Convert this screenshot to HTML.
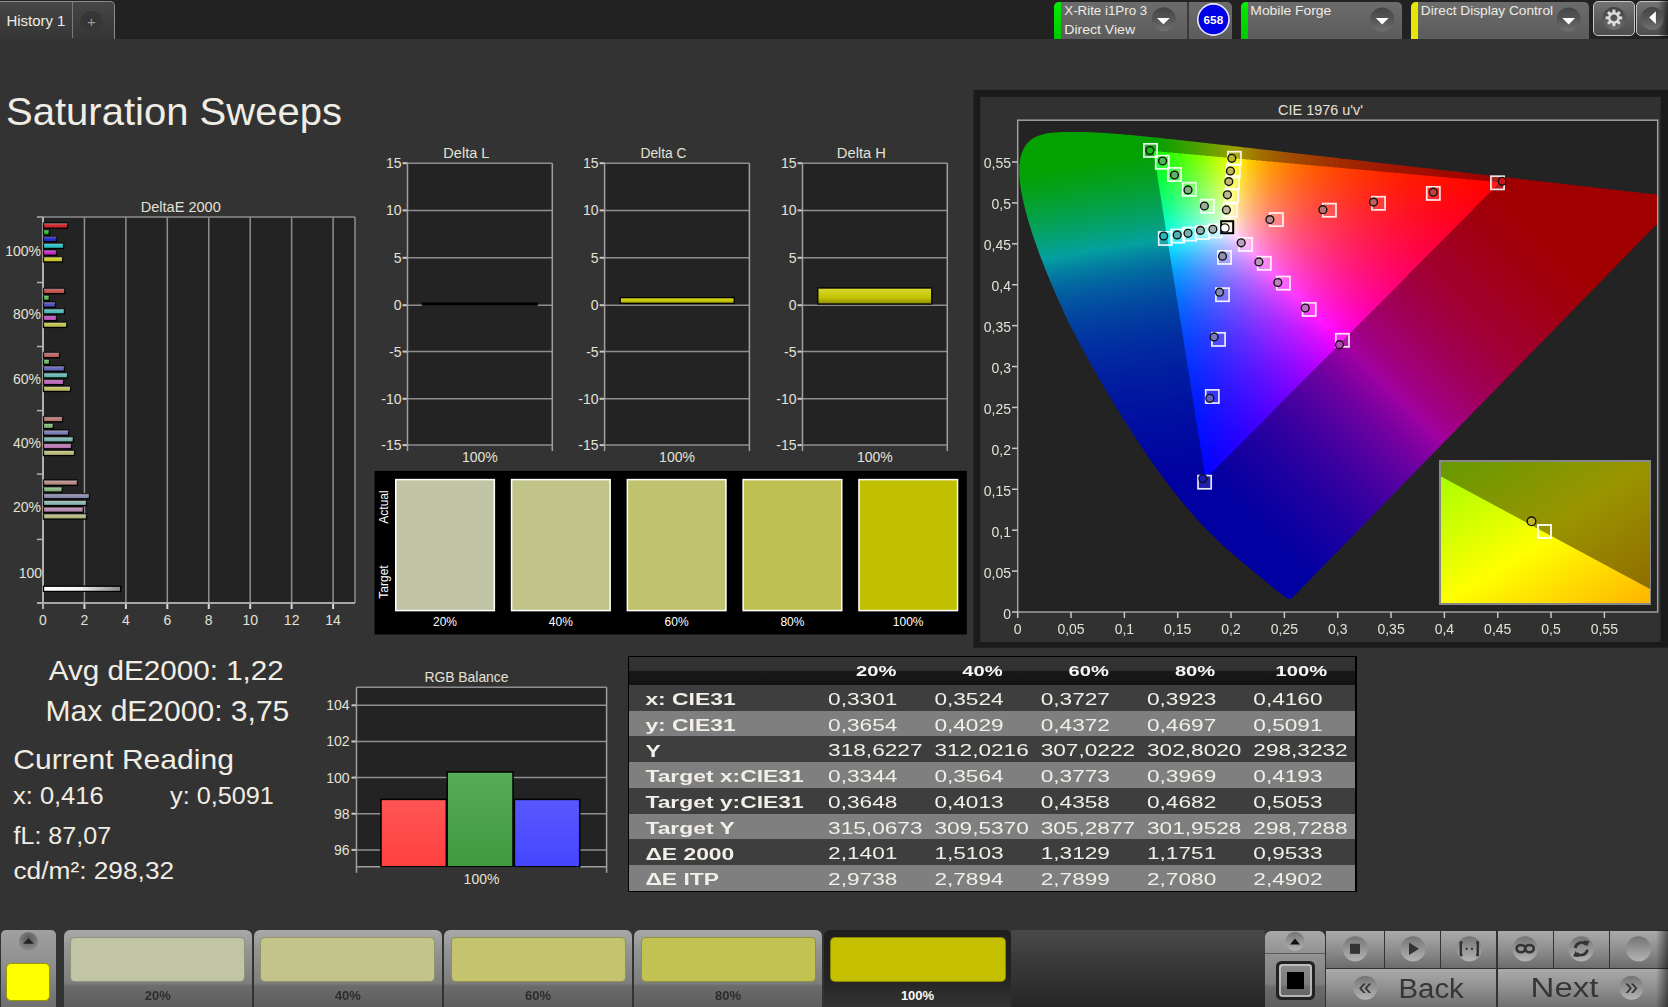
<!DOCTYPE html>
<html><head><meta charset="utf-8">
<style>
html,body{margin:0;padding:0;}
body{width:1668px;height:1007px;overflow:hidden;background:#333;position:relative;font-family:"Liberation Sans",sans-serif;}
svg text{font-family:"Liberation Sans",sans-serif;}
.abs{position:absolute;}
.th{position:absolute;width:120px;text-align:center;color:#f4f4f4;font-weight:bold;font-size:15px;line-height:18px;transform:scaleX(1.32);}
.tl{position:absolute;color:#f0ede6;font-weight:bold;font-size:15.5px;line-height:20px;transform-origin:0 0;transform:scaleX(1.36);white-space:nowrap;}
.tv{position:absolute;color:#f0ede6;font-size:15.5px;line-height:20px;transform-origin:0 0;transform:scaleX(1.40);white-space:nowrap;}
.big{position:absolute;color:#efece2;white-space:nowrap;line-height:1;}
</style></head><body>
<!-- top bar -->
<div class="abs" style="left:0;top:0;width:1668px;height:39px;background:#222;"></div>
<div class="abs" style="left:0;top:0.5px;width:114.5px;height:38.5px;background:linear-gradient(#464646,#363636);border-top:1.2px solid #8a8a8a;border-right:1.5px solid #8a8a8a;border-radius:0 5px 0 0;box-sizing:border-box;"></div>
<div class="abs" style="left:72px;top:2px;width:1px;height:36px;background:#7a7a7a;"></div>

<div class="abs" style="left:80px;top:10.5px;width:23px;height:23px;border-radius:50%;background:radial-gradient(circle at 50% 45%,#333 0%,#383838 70%,#444 100%);"></div>
<div class="abs" style="left:84px;top:13px;width:15px;text-align:center;font-size:15px;color:#9a9a9a;line-height:18px;">+</div>

<div class="abs" style="left:1054px;top:1.5px;width:178px;height:37px;background:linear-gradient(#6c6c6c,#5c5c5c);border-radius:5px 5px 0 0;overflow:hidden;">
  <div class="abs" style="left:0;top:0;width:7px;height:37px;background:linear-gradient(#00ee00,#00c800);"></div>
  <div class="abs" style="left:133px;top:0;width:1.5px;height:37px;background:#3a3a3a;"></div>
</div>



<div class="abs" style="left:1240.5px;top:1.5px;width:161.5px;height:37px;background:linear-gradient(#6c6c6c,#5c5c5c);border-radius:5px 5px 0 0;overflow:hidden;">
  <div class="abs" style="left:0;top:0;width:7px;height:37px;background:linear-gradient(#00ee00,#00c800);"></div>
</div>


<div class="abs" style="left:1410.8px;top:1.5px;width:178.2px;height:37px;background:linear-gradient(#6c6c6c,#5c5c5c);border-radius:5px 5px 0 0;overflow:hidden;">
  <div class="abs" style="left:0;top:0;width:7px;height:37px;background:#e6e600;"></div>
</div>


<div class="abs" style="left:1593px;top:1.2px;width:42px;height:34.4px;background:linear-gradient(#737373,#5a5a5a 60%,#4e4e4e);border:1.2px solid #c4c4c4;border-radius:5px;box-sizing:border-box;"></div>
<div class="abs" style="left:1636px;top:1.2px;width:40px;height:34.4px;background:linear-gradient(#737373,#5a5a5a 60%,#4e4e4e);border:1.2px solid #c4c4c4;border-radius:5px;box-sizing:border-box;"></div><div class="abs" style="left:1658px;top:0;width:10px;height:38px;background:linear-gradient(90deg,rgba(0,0,0,0),rgba(0,0,0,0.55));"></div>

<svg class="abs" style="left:0;top:0;" width="1668" height="1007">
<defs>
<linearGradient id="dd" x1="0" y1="0" x2="0" y2="1"><stop offset="0" stop-color="#444"/><stop offset="0.5" stop-color="#555"/><stop offset="1" stop-color="#707070"/></linearGradient>
</defs>
<circle cx="1163.7" cy="19.2" r="12" fill="url(#dd)"/>
<path d="M1157 17.9 L1169.8 17.9 L1163.4 24.3 Z" fill="#fff"/>
<circle cx="1382.2" cy="19.4" r="12" fill="url(#dd)"/>
<path d="M1375.8 18.1 L1388.6 18.1 L1382.2 24.5 Z" fill="#fff"/>
<circle cx="1568.7" cy="19.4" r="12" fill="url(#dd)"/>
<path d="M1562.3 18.1 L1575.1 18.1 L1568.7 24.5 Z" fill="#fff"/>
<circle cx="1213.4" cy="19.5" r="15.6" fill="#0000e6" stroke="#e8e8ff" stroke-width="1.6"/>
<text x="1203.6" y="23.6" font-size="11" font-weight="bold" fill="#fff" textLength="19.6" lengthAdjust="spacingAndGlyphs">658</text>
<circle cx="1613.9" cy="18.4" r="11.4" fill="url(#dd)"/>
<g transform="translate(1613.9,17.9)" fill="#dcdcdc">
<circle r="4.7" fill="none" stroke="#dcdcdc" stroke-width="2.4"/>
<rect x="-1.5" y="-8.3" width="3" height="3.6" transform="rotate(0)"/><rect x="-1.5" y="-8.3" width="3" height="3.6" transform="rotate(45)"/><rect x="-1.5" y="-8.3" width="3" height="3.6" transform="rotate(90)"/><rect x="-1.5" y="-8.3" width="3" height="3.6" transform="rotate(135)"/><rect x="-1.5" y="-8.3" width="3" height="3.6" transform="rotate(180)"/><rect x="-1.5" y="-8.3" width="3" height="3.6" transform="rotate(225)"/><rect x="-1.5" y="-8.3" width="3" height="3.6" transform="rotate(270)"/><rect x="-1.5" y="-8.3" width="3" height="3.6" transform="rotate(315)"/>
</g>
<circle cx="1652.2" cy="18.4" r="11.4" fill="url(#dd)"/>
<path d="M1649.2 17.5 L1655.9 11.2 L1655.9 23.9 Z" fill="#fff"/>
</svg>



<svg class="abs" style="left:0;top:0;" width="1668" height="1007">
<text x="140.69" y="211.9" font-size="14.3" fill="#e4e1d6" font-weight="normal" textLength="80.13" lengthAdjust="spacingAndGlyphs">DeltaE 2000</text>
<rect x="43" y="217" width="312" height="386" fill="#232323" />
<line x1="84.44" y1="217" x2="84.44" y2="603" stroke="#8e8e8e" stroke-width="1.5" />
<line x1="84.44" y1="603" x2="84.44" y2="609" stroke="#d8d8d8" stroke-width="2" />
<line x1="125.88" y1="217" x2="125.88" y2="603" stroke="#8e8e8e" stroke-width="1.5" />
<line x1="125.88" y1="603" x2="125.88" y2="609" stroke="#d8d8d8" stroke-width="2" />
<line x1="167.32" y1="217" x2="167.32" y2="603" stroke="#8e8e8e" stroke-width="1.5" />
<line x1="167.32" y1="603" x2="167.32" y2="609" stroke="#d8d8d8" stroke-width="2" />
<line x1="208.76" y1="217" x2="208.76" y2="603" stroke="#8e8e8e" stroke-width="1.5" />
<line x1="208.76" y1="603" x2="208.76" y2="609" stroke="#d8d8d8" stroke-width="2" />
<line x1="250.2" y1="217" x2="250.2" y2="603" stroke="#8e8e8e" stroke-width="1.5" />
<line x1="250.2" y1="603" x2="250.2" y2="609" stroke="#d8d8d8" stroke-width="2" />
<line x1="291.64" y1="217" x2="291.64" y2="603" stroke="#8e8e8e" stroke-width="1.5" />
<line x1="291.64" y1="603" x2="291.64" y2="609" stroke="#d8d8d8" stroke-width="2" />
<line x1="333.08" y1="217" x2="333.08" y2="603" stroke="#8e8e8e" stroke-width="1.5" />
<line x1="333.08" y1="603" x2="333.08" y2="609" stroke="#d8d8d8" stroke-width="2" />
<line x1="43" y1="217" x2="355" y2="217" stroke="#8e8e8e" stroke-width="1.5" />
<line x1="355" y1="217" x2="355" y2="603" stroke="#8e8e8e" stroke-width="1.5" />
<line x1="37" y1="603" x2="355" y2="603" stroke="#a8a8a8" stroke-width="1.8" />
<line x1="43" y1="217" x2="43" y2="609" stroke="#b0b0b0" stroke-width="2" />
<line x1="37" y1="217" x2="43" y2="217" stroke="#b0b0b0" stroke-width="1.5" />
<line x1="37" y1="282.5" x2="43" y2="282.5" stroke="#b0b0b0" stroke-width="1.5" />
<line x1="37" y1="346.5" x2="43" y2="346.5" stroke="#b0b0b0" stroke-width="1.5" />
<line x1="37" y1="410.6" x2="43" y2="410.6" stroke="#b0b0b0" stroke-width="1.5" />
<line x1="37" y1="474.1" x2="43" y2="474.1" stroke="#b0b0b0" stroke-width="1.5" />
<line x1="37" y1="539.4" x2="43" y2="539.4" stroke="#b0b0b0" stroke-width="1.5" />
<line x1="37" y1="603.2" x2="43" y2="603.2" stroke="#b0b0b0" stroke-width="1.5" />
<text x="43" y="625" font-size="14" text-anchor="middle" fill="#e4e1d6" font-weight="normal" >0</text>
<text x="84.44" y="625" font-size="14" text-anchor="middle" fill="#e4e1d6" font-weight="normal" >2</text>
<text x="125.88" y="625" font-size="14" text-anchor="middle" fill="#e4e1d6" font-weight="normal" >4</text>
<text x="167.32" y="625" font-size="14" text-anchor="middle" fill="#e4e1d6" font-weight="normal" >6</text>
<text x="208.76" y="625" font-size="14" text-anchor="middle" fill="#e4e1d6" font-weight="normal" >8</text>
<text x="250.2" y="625" font-size="14" text-anchor="middle" fill="#e4e1d6" font-weight="normal" >10</text>
<text x="291.64" y="625" font-size="14" text-anchor="middle" fill="#e4e1d6" font-weight="normal" >12</text>
<text x="333.08" y="625" font-size="14" text-anchor="middle" fill="#e4e1d6" font-weight="normal" >14</text>
<text x="41" y="255.6" font-size="14" text-anchor="end" fill="#e4e1d6" font-weight="normal" >100%</text>
<text x="41" y="319.4" font-size="14" text-anchor="end" fill="#e4e1d6" font-weight="normal" >80%</text>
<text x="41" y="383.6" font-size="14" text-anchor="end" fill="#e4e1d6" font-weight="normal" >60%</text>
<text x="41" y="448" font-size="14" text-anchor="end" fill="#e4e1d6" font-weight="normal" >40%</text>
<text x="41" y="512" font-size="14" text-anchor="end" fill="#e4e1d6" font-weight="normal" >20%</text>
<text x="42" y="578" font-size="14" text-anchor="end" fill="#e4e1d6" font-weight="normal" >100</text>
<defs><linearGradient id="shine" x1="0" y1="0" x2="0" y2="1"><stop offset="0" stop-color="#fff" stop-opacity="0.35"/><stop offset="0.5" stop-color="#fff" stop-opacity="0.05"/><stop offset="1" stop-color="#000" stop-opacity="0.15"/></linearGradient><linearGradient id="whitebar" x1="0" y1="0" x2="1" y2="0"><stop offset="0" stop-color="#fff"/><stop offset="0.45" stop-color="#f4f4f4"/><stop offset="1" stop-color="#8a8a8a"/></linearGradient></defs>
<rect x="43.5" y="223" width="24.1" height="5.2" fill="#c81e1e" stroke="#000" stroke-width="1.3"/>
<rect x="43.5" y="223" width="24.1" height="5.2" fill="url(#shine)"/>
<rect x="43.5" y="229.75" width="5.7" height="5.2" fill="#1ebe1e" stroke="#000" stroke-width="1.3"/>
<rect x="43.5" y="229.75" width="5.7" height="5.2" fill="url(#shine)"/>
<rect x="43.5" y="236.5" width="13.3" height="5.2" fill="#1e1ec8" stroke="#000" stroke-width="1.3"/>
<rect x="43.5" y="236.5" width="13.3" height="5.2" fill="url(#shine)"/>
<rect x="43.5" y="243.25" width="20" height="5.2" fill="#1ebebe" stroke="#000" stroke-width="1.3"/>
<rect x="43.5" y="243.25" width="20" height="5.2" fill="url(#shine)"/>
<rect x="43.5" y="250" width="13" height="5.2" fill="#c81ec8" stroke="#000" stroke-width="1.3"/>
<rect x="43.5" y="250" width="13" height="5.2" fill="url(#shine)"/>
<rect x="43.5" y="256.75" width="19.1" height="5.2" fill="#c8c81e" stroke="#000" stroke-width="1.3"/>
<rect x="43.5" y="256.75" width="19.1" height="5.2" fill="url(#shine)"/>
<rect x="43.5" y="288.5" width="21.2" height="5.2" fill="#c04946" stroke="#000" stroke-width="1.3"/>
<rect x="43.5" y="288.5" width="21.2" height="5.2" fill="url(#shine)"/>
<rect x="43.5" y="295.25" width="5.8" height="5.2" fill="#49b946" stroke="#000" stroke-width="1.3"/>
<rect x="43.5" y="295.25" width="5.8" height="5.2" fill="url(#shine)"/>
<rect x="43.5" y="302" width="11.9" height="5.2" fill="#4949bd" stroke="#000" stroke-width="1.3"/>
<rect x="43.5" y="302" width="11.9" height="5.2" fill="url(#shine)"/>
<rect x="43.5" y="308.75" width="20.9" height="5.2" fill="#49b9b6" stroke="#000" stroke-width="1.3"/>
<rect x="43.5" y="308.75" width="20.9" height="5.2" fill="url(#shine)"/>
<rect x="43.5" y="315.5" width="13" height="5.2" fill="#c049bd" stroke="#000" stroke-width="1.3"/>
<rect x="43.5" y="315.5" width="13" height="5.2" fill="url(#shine)"/>
<rect x="43.5" y="322.25" width="23.2" height="5.2" fill="#c0c046" stroke="#000" stroke-width="1.3"/>
<rect x="43.5" y="322.25" width="23.2" height="5.2" fill="url(#shine)"/>
<rect x="43.5" y="352.5" width="16" height="5.2" fill="#bc5f5a" stroke="#000" stroke-width="1.3"/>
<rect x="43.5" y="352.5" width="16" height="5.2" fill="url(#shine)"/>
<rect x="43.5" y="359.25" width="6" height="5.2" fill="#5fb75a" stroke="#000" stroke-width="1.3"/>
<rect x="43.5" y="359.25" width="6" height="5.2" fill="url(#shine)"/>
<rect x="43.5" y="366" width="20.9" height="5.2" fill="#5f5fb8" stroke="#000" stroke-width="1.3"/>
<rect x="43.5" y="366" width="20.9" height="5.2" fill="url(#shine)"/>
<rect x="43.5" y="372.75" width="24.1" height="5.2" fill="#5fb7b2" stroke="#000" stroke-width="1.3"/>
<rect x="43.5" y="372.75" width="24.1" height="5.2" fill="url(#shine)"/>
<rect x="43.5" y="379.5" width="20" height="5.2" fill="#bc5fb8" stroke="#000" stroke-width="1.3"/>
<rect x="43.5" y="379.5" width="20" height="5.2" fill="url(#shine)"/>
<rect x="43.5" y="386.25" width="27.1" height="5.2" fill="#bcbc5a" stroke="#000" stroke-width="1.3"/>
<rect x="43.5" y="386.25" width="27.1" height="5.2" fill="url(#shine)"/>
<rect x="43.5" y="416.6" width="19.1" height="5.2" fill="#b9756f" stroke="#000" stroke-width="1.3"/>
<rect x="43.5" y="416.6" width="19.1" height="5.2" fill="url(#shine)"/>
<rect x="43.5" y="423.35" width="9.8" height="5.2" fill="#75b56f" stroke="#000" stroke-width="1.3"/>
<rect x="43.5" y="423.35" width="9.8" height="5.2" fill="url(#shine)"/>
<rect x="43.5" y="430.1" width="25.1" height="5.2" fill="#7575b3" stroke="#000" stroke-width="1.3"/>
<rect x="43.5" y="430.1" width="25.1" height="5.2" fill="url(#shine)"/>
<rect x="43.5" y="436.85" width="29.8" height="5.2" fill="#75b5af" stroke="#000" stroke-width="1.3"/>
<rect x="43.5" y="436.85" width="29.8" height="5.2" fill="url(#shine)"/>
<rect x="43.5" y="443.6" width="28" height="5.2" fill="#b975b3" stroke="#000" stroke-width="1.3"/>
<rect x="43.5" y="443.6" width="28" height="5.2" fill="url(#shine)"/>
<rect x="43.5" y="450.35" width="31" height="5.2" fill="#b9b96f" stroke="#000" stroke-width="1.3"/>
<rect x="43.5" y="450.35" width="31" height="5.2" fill="url(#shine)"/>
<rect x="43.5" y="480.1" width="33.9" height="5.2" fill="#b6867f" stroke="#000" stroke-width="1.3"/>
<rect x="43.5" y="480.1" width="33.9" height="5.2" fill="url(#shine)"/>
<rect x="43.5" y="486.85" width="18.7" height="5.2" fill="#86b37f" stroke="#000" stroke-width="1.3"/>
<rect x="43.5" y="486.85" width="18.7" height="5.2" fill="url(#shine)"/>
<rect x="43.5" y="493.6" width="45.9" height="5.2" fill="#8686ae" stroke="#000" stroke-width="1.3"/>
<rect x="43.5" y="493.6" width="45.9" height="5.2" fill="url(#shine)"/>
<rect x="43.5" y="500.35" width="43" height="5.2" fill="#86b3ac" stroke="#000" stroke-width="1.3"/>
<rect x="43.5" y="500.35" width="43" height="5.2" fill="url(#shine)"/>
<rect x="43.5" y="507.1" width="39.8" height="5.2" fill="#b686ae" stroke="#000" stroke-width="1.3"/>
<rect x="43.5" y="507.1" width="39.8" height="5.2" fill="url(#shine)"/>
<rect x="43.5" y="513.85" width="43" height="5.2" fill="#b6b67f" stroke="#000" stroke-width="1.3"/>
<rect x="43.5" y="513.85" width="43" height="5.2" fill="url(#shine)"/>
<rect x="43.5" y="586.2" width="77.2" height="5.2" fill="url(#whitebar)" stroke="#000" stroke-width="1.3"/>
<rect x="407.5" y="163.2" width="144.8" height="281.9" fill="#232323" />
<text x="443.36" y="157.9" font-size="13.8" fill="#e4e1d6" font-weight="normal" textLength="46.08" lengthAdjust="spacingAndGlyphs">Delta L</text>
<line x1="407.5" y1="163.2" x2="552.3" y2="163.2" stroke="#8e8e8e" stroke-width="1.5" />
<line x1="402.5" y1="163.2" x2="407.5" y2="163.2" stroke="#c8c8c8" stroke-width="2" />
<text x="401.5" y="168.2" font-size="14" text-anchor="end" fill="#e4e1d6" font-weight="normal" >15</text>
<line x1="407.5" y1="210.4" x2="552.3" y2="210.4" stroke="#8e8e8e" stroke-width="1.5" />
<line x1="402.5" y1="210.4" x2="407.5" y2="210.4" stroke="#c8c8c8" stroke-width="2" />
<text x="401.5" y="215.4" font-size="14" text-anchor="end" fill="#e4e1d6" font-weight="normal" >10</text>
<line x1="407.5" y1="257.8" x2="552.3" y2="257.8" stroke="#8e8e8e" stroke-width="1.5" />
<line x1="402.5" y1="257.8" x2="407.5" y2="257.8" stroke="#c8c8c8" stroke-width="2" />
<text x="401.5" y="262.8" font-size="14" text-anchor="end" fill="#e4e1d6" font-weight="normal" >5</text>
<line x1="407.5" y1="305.2" x2="552.3" y2="305.2" stroke="#8e8e8e" stroke-width="1.5" />
<line x1="402.5" y1="305.2" x2="407.5" y2="305.2" stroke="#c8c8c8" stroke-width="2" />
<text x="401.5" y="310.2" font-size="14" text-anchor="end" fill="#e4e1d6" font-weight="normal" >0</text>
<line x1="407.5" y1="351.6" x2="552.3" y2="351.6" stroke="#8e8e8e" stroke-width="1.5" />
<line x1="402.5" y1="351.6" x2="407.5" y2="351.6" stroke="#c8c8c8" stroke-width="2" />
<text x="401.5" y="356.6" font-size="14" text-anchor="end" fill="#e4e1d6" font-weight="normal" >-5</text>
<line x1="407.5" y1="398.8" x2="552.3" y2="398.8" stroke="#8e8e8e" stroke-width="1.5" />
<line x1="402.5" y1="398.8" x2="407.5" y2="398.8" stroke="#c8c8c8" stroke-width="2" />
<text x="401.5" y="403.8" font-size="14" text-anchor="end" fill="#e4e1d6" font-weight="normal" >-10</text>
<line x1="407.5" y1="445.1" x2="552.3" y2="445.1" stroke="#8e8e8e" stroke-width="1.5" />
<line x1="402.5" y1="445.1" x2="407.5" y2="445.1" stroke="#c8c8c8" stroke-width="2" />
<text x="401.5" y="450.1" font-size="14" text-anchor="end" fill="#e4e1d6" font-weight="normal" >-15</text>
<line x1="407.5" y1="163.2" x2="407.5" y2="451.1" stroke="#a0a0a0" stroke-width="1.5" />
<line x1="552.3" y1="163.2" x2="552.3" y2="451.1" stroke="#a0a0a0" stroke-width="1.5" />
<text x="479.9" y="462" font-size="14" text-anchor="middle" fill="#e4e1d6" font-weight="normal" >100%</text>
<rect x="604.6" y="163.2" width="144.8" height="281.9" fill="#232323" />
<text x="640.46" y="157.9" font-size="13.8" fill="#e4e1d6" font-weight="normal" textLength="46.08" lengthAdjust="spacingAndGlyphs">Delta C</text>
<line x1="604.6" y1="163.2" x2="749.4" y2="163.2" stroke="#8e8e8e" stroke-width="1.5" />
<line x1="599.6" y1="163.2" x2="604.6" y2="163.2" stroke="#c8c8c8" stroke-width="2" />
<text x="598.6" y="168.2" font-size="14" text-anchor="end" fill="#e4e1d6" font-weight="normal" >15</text>
<line x1="604.6" y1="210.4" x2="749.4" y2="210.4" stroke="#8e8e8e" stroke-width="1.5" />
<line x1="599.6" y1="210.4" x2="604.6" y2="210.4" stroke="#c8c8c8" stroke-width="2" />
<text x="598.6" y="215.4" font-size="14" text-anchor="end" fill="#e4e1d6" font-weight="normal" >10</text>
<line x1="604.6" y1="257.8" x2="749.4" y2="257.8" stroke="#8e8e8e" stroke-width="1.5" />
<line x1="599.6" y1="257.8" x2="604.6" y2="257.8" stroke="#c8c8c8" stroke-width="2" />
<text x="598.6" y="262.8" font-size="14" text-anchor="end" fill="#e4e1d6" font-weight="normal" >5</text>
<line x1="604.6" y1="305.2" x2="749.4" y2="305.2" stroke="#8e8e8e" stroke-width="1.5" />
<line x1="599.6" y1="305.2" x2="604.6" y2="305.2" stroke="#c8c8c8" stroke-width="2" />
<text x="598.6" y="310.2" font-size="14" text-anchor="end" fill="#e4e1d6" font-weight="normal" >0</text>
<line x1="604.6" y1="351.6" x2="749.4" y2="351.6" stroke="#8e8e8e" stroke-width="1.5" />
<line x1="599.6" y1="351.6" x2="604.6" y2="351.6" stroke="#c8c8c8" stroke-width="2" />
<text x="598.6" y="356.6" font-size="14" text-anchor="end" fill="#e4e1d6" font-weight="normal" >-5</text>
<line x1="604.6" y1="398.8" x2="749.4" y2="398.8" stroke="#8e8e8e" stroke-width="1.5" />
<line x1="599.6" y1="398.8" x2="604.6" y2="398.8" stroke="#c8c8c8" stroke-width="2" />
<text x="598.6" y="403.8" font-size="14" text-anchor="end" fill="#e4e1d6" font-weight="normal" >-10</text>
<line x1="604.6" y1="445.1" x2="749.4" y2="445.1" stroke="#8e8e8e" stroke-width="1.5" />
<line x1="599.6" y1="445.1" x2="604.6" y2="445.1" stroke="#c8c8c8" stroke-width="2" />
<text x="598.6" y="450.1" font-size="14" text-anchor="end" fill="#e4e1d6" font-weight="normal" >-15</text>
<line x1="604.6" y1="163.2" x2="604.6" y2="451.1" stroke="#a0a0a0" stroke-width="1.5" />
<line x1="749.4" y1="163.2" x2="749.4" y2="451.1" stroke="#a0a0a0" stroke-width="1.5" />
<text x="677" y="462" font-size="14" text-anchor="middle" fill="#e4e1d6" font-weight="normal" >100%</text>
<rect x="802.5" y="163.2" width="144.8" height="281.9" fill="#232323" />
<text x="836.81" y="157.9" font-size="13.8" fill="#e4e1d6" font-weight="normal" textLength="49.18" lengthAdjust="spacingAndGlyphs">Delta H</text>
<line x1="802.5" y1="163.2" x2="947.3" y2="163.2" stroke="#8e8e8e" stroke-width="1.5" />
<line x1="797.5" y1="163.2" x2="802.5" y2="163.2" stroke="#c8c8c8" stroke-width="2" />
<text x="796.5" y="168.2" font-size="14" text-anchor="end" fill="#e4e1d6" font-weight="normal" >15</text>
<line x1="802.5" y1="210.4" x2="947.3" y2="210.4" stroke="#8e8e8e" stroke-width="1.5" />
<line x1="797.5" y1="210.4" x2="802.5" y2="210.4" stroke="#c8c8c8" stroke-width="2" />
<text x="796.5" y="215.4" font-size="14" text-anchor="end" fill="#e4e1d6" font-weight="normal" >10</text>
<line x1="802.5" y1="257.8" x2="947.3" y2="257.8" stroke="#8e8e8e" stroke-width="1.5" />
<line x1="797.5" y1="257.8" x2="802.5" y2="257.8" stroke="#c8c8c8" stroke-width="2" />
<text x="796.5" y="262.8" font-size="14" text-anchor="end" fill="#e4e1d6" font-weight="normal" >5</text>
<line x1="802.5" y1="305.2" x2="947.3" y2="305.2" stroke="#8e8e8e" stroke-width="1.5" />
<line x1="797.5" y1="305.2" x2="802.5" y2="305.2" stroke="#c8c8c8" stroke-width="2" />
<text x="796.5" y="310.2" font-size="14" text-anchor="end" fill="#e4e1d6" font-weight="normal" >0</text>
<line x1="802.5" y1="351.6" x2="947.3" y2="351.6" stroke="#8e8e8e" stroke-width="1.5" />
<line x1="797.5" y1="351.6" x2="802.5" y2="351.6" stroke="#c8c8c8" stroke-width="2" />
<text x="796.5" y="356.6" font-size="14" text-anchor="end" fill="#e4e1d6" font-weight="normal" >-5</text>
<line x1="802.5" y1="398.8" x2="947.3" y2="398.8" stroke="#8e8e8e" stroke-width="1.5" />
<line x1="797.5" y1="398.8" x2="802.5" y2="398.8" stroke="#c8c8c8" stroke-width="2" />
<text x="796.5" y="403.8" font-size="14" text-anchor="end" fill="#e4e1d6" font-weight="normal" >-10</text>
<line x1="802.5" y1="445.1" x2="947.3" y2="445.1" stroke="#8e8e8e" stroke-width="1.5" />
<line x1="797.5" y1="445.1" x2="802.5" y2="445.1" stroke="#c8c8c8" stroke-width="2" />
<text x="796.5" y="450.1" font-size="14" text-anchor="end" fill="#e4e1d6" font-weight="normal" >-15</text>
<line x1="802.5" y1="163.2" x2="802.5" y2="451.1" stroke="#a0a0a0" stroke-width="1.5" />
<line x1="947.3" y1="163.2" x2="947.3" y2="451.1" stroke="#a0a0a0" stroke-width="1.5" />
<text x="874.9" y="462" font-size="14" text-anchor="middle" fill="#e4e1d6" font-weight="normal" >100%</text>
<defs><linearGradient id="ybar" x1="0" y1="0" x2="0" y2="1"><stop offset="0" stop-color="#d8d830"/><stop offset="0.6" stop-color="#c4c400"/><stop offset="1" stop-color="#8a8a00"/></linearGradient></defs>
<rect x="421.8" y="302.4" width="116.2" height="3.4" fill="#000" />
<rect x="620.2" y="297.6" width="114" height="5.8" fill="url(#ybar)" stroke="#000" stroke-width="1.3"/>
<rect x="817.8" y="288" width="114" height="16" fill="url(#ybar)" stroke="#000" stroke-width="1.3"/>
<rect x="374.6" y="470.9" width="592.2" height="163.6" fill="#000" />
<rect x="395.75" y="479.6" width="98.6" height="131" fill="#c1c3a5" stroke="#fff" stroke-width="1.5"/>
<text x="445" y="626" font-size="12" text-anchor="middle" fill="#fff" font-weight="normal" >20%</text>
<rect x="511.55" y="479.6" width="98.6" height="131" fill="#c0c489" stroke="#fff" stroke-width="1.5"/>
<text x="560.8" y="626" font-size="12" text-anchor="middle" fill="#fff" font-weight="normal" >40%</text>
<rect x="627.35" y="479.6" width="98.6" height="131" fill="#c0c26d" stroke="#fff" stroke-width="1.5"/>
<text x="676.6" y="626" font-size="12" text-anchor="middle" fill="#fff" font-weight="normal" >60%</text>
<rect x="743.15" y="479.6" width="98.6" height="131" fill="#bfc052" stroke="#fff" stroke-width="1.5"/>
<text x="792.4" y="626" font-size="12" text-anchor="middle" fill="#fff" font-weight="normal" >80%</text>
<rect x="858.95" y="479.6" width="98.6" height="131" fill="#c0c000" stroke="#fff" stroke-width="1.5"/>
<text x="908.2" y="626" font-size="12" text-anchor="middle" fill="#fff" font-weight="normal" >100%</text>
<text transform="translate(388,507) rotate(-90)" font-size="12" text-anchor="middle" fill="#fff">Actual</text>
<text transform="translate(388,582) rotate(-90)" font-size="12" text-anchor="middle" fill="#fff">Target</text>
<rect x="356.5" y="687.2" width="250.1" height="179.6" fill="#232323" />
<text x="424.38" y="681.9" font-size="14.5" fill="#e4e1d6" font-weight="normal" textLength="84.15" lengthAdjust="spacingAndGlyphs">RGB Balance</text>
<line x1="356.5" y1="705.3" x2="606.6" y2="705.3" stroke="#8e8e8e" stroke-width="1.5" />
<line x1="351.5" y1="705.3" x2="356.5" y2="705.3" stroke="#c8c8c8" stroke-width="2" />
<text x="349.5" y="710.3" font-size="14" text-anchor="end" fill="#e4e1d6" font-weight="normal" >104</text>
<line x1="356.5" y1="741.45" x2="606.6" y2="741.45" stroke="#8e8e8e" stroke-width="1.5" />
<line x1="351.5" y1="741.45" x2="356.5" y2="741.45" stroke="#c8c8c8" stroke-width="2" />
<text x="349.5" y="746.45" font-size="14" text-anchor="end" fill="#e4e1d6" font-weight="normal" >102</text>
<line x1="356.5" y1="777.6" x2="606.6" y2="777.6" stroke="#8e8e8e" stroke-width="1.5" />
<line x1="351.5" y1="777.6" x2="356.5" y2="777.6" stroke="#c8c8c8" stroke-width="2" />
<text x="349.5" y="782.6" font-size="14" text-anchor="end" fill="#e4e1d6" font-weight="normal" >100</text>
<line x1="356.5" y1="813.75" x2="606.6" y2="813.75" stroke="#8e8e8e" stroke-width="1.5" />
<line x1="351.5" y1="813.75" x2="356.5" y2="813.75" stroke="#c8c8c8" stroke-width="2" />
<text x="349.5" y="818.75" font-size="14" text-anchor="end" fill="#e4e1d6" font-weight="normal" >98</text>
<line x1="356.5" y1="849.9" x2="606.6" y2="849.9" stroke="#8e8e8e" stroke-width="1.5" />
<line x1="351.5" y1="849.9" x2="356.5" y2="849.9" stroke="#c8c8c8" stroke-width="2" />
<text x="349.5" y="854.9" font-size="14" text-anchor="end" fill="#e4e1d6" font-weight="normal" >96</text>
<line x1="356.5" y1="687.2" x2="606.6" y2="687.2" stroke="#8e8e8e" stroke-width="1.5" />
<line x1="356.5" y1="687.2" x2="356.5" y2="872.8" stroke="#a0a0a0" stroke-width="1.5" />
<line x1="606.6" y1="687.2" x2="606.6" y2="872.8" stroke="#a0a0a0" stroke-width="1.5" />
<line x1="356.5" y1="866.8" x2="606.6" y2="866.8" stroke="#a0a0a0" stroke-width="1.5" />
<defs><linearGradient id="rbar" x1="0" y1="0" x2="0" y2="1"><stop offset="0" stop-color="#ff5555"/><stop offset="1" stop-color="#ff4040"/></linearGradient><linearGradient id="gbar" x1="0" y1="0" x2="0" y2="1"><stop offset="0" stop-color="#58ab58"/><stop offset="1" stop-color="#3f9a3f"/></linearGradient><linearGradient id="bbar" x1="0" y1="0" x2="0" y2="1"><stop offset="0" stop-color="#5858ff"/><stop offset="1" stop-color="#4545ff"/></linearGradient></defs>
<rect x="381" y="799.4" width="65.3" height="67.4" fill="url(#rbar)" stroke="#000" stroke-width="1.5"/>
<rect x="447.2" y="772" width="65.8" height="94.8" fill="url(#gbar)" stroke="#000" stroke-width="1.5"/>
<rect x="514.4" y="799.4" width="65.3" height="67.4" fill="url(#bbar)" stroke="#000" stroke-width="1.5"/>
<text x="481.5" y="884" font-size="14" text-anchor="middle" fill="#e4e1d6" font-weight="normal" >100%</text>
<text x="6.03" y="125.3" font-size="39.5" fill="#f0ede4" font-weight="normal" textLength="335.95" lengthAdjust="spacingAndGlyphs">Saturation Sweeps</text>
<text x="48.69" y="679.6" font-size="28.3" fill="#f0ede4" font-weight="normal" textLength="235.13" lengthAdjust="spacingAndGlyphs">Avg dE2000: 1,22</text>
<text x="45.56" y="720.9" font-size="28.8" fill="#f0ede4" font-weight="normal" textLength="243.78" lengthAdjust="spacingAndGlyphs">Max dE2000: 3,75</text>
<text x="13.3" y="768.5" font-size="28" fill="#f0ede4" font-weight="normal" textLength="220.6" lengthAdjust="spacingAndGlyphs">Current Reading</text>
<text x="13" y="803.5" font-size="24" fill="#f0ede4" font-weight="normal" textLength="90.6" lengthAdjust="spacingAndGlyphs">x: 0,416</text>
<text x="170" y="803.5" font-size="24" fill="#f0ede4" font-weight="normal" textLength="103.9" lengthAdjust="spacingAndGlyphs">y: 0,5091</text>
<text x="13.48" y="844.4" font-size="24.4" fill="#f0ede4" font-weight="normal" textLength="97.64" lengthAdjust="spacingAndGlyphs">fL: 87,07</text>
<text x="13.48" y="878.5" font-size="24.4" fill="#f0ede4" font-weight="normal" textLength="160.64" lengthAdjust="spacingAndGlyphs">cd/m&#178;: 298,32</text>
<text x="6.47" y="25.9" font-size="14.5" fill="#eeebe3" font-weight="normal" textLength="58.95" lengthAdjust="spacingAndGlyphs">History 1</text>
<text x="1064.25" y="15" font-size="13" fill="#eeebe3" font-weight="normal" textLength="82.9" lengthAdjust="spacingAndGlyphs">X-Rite i1Pro 3</text>
<text x="1064.25" y="34.1" font-size="13" fill="#eeebe3" font-weight="normal" textLength="70.8" lengthAdjust="spacingAndGlyphs">Direct View</text>
<text x="1250.35" y="15" font-size="13" fill="#eeebe3" font-weight="normal" textLength="80.9" lengthAdjust="spacingAndGlyphs">Mobile Forge</text>
<text x="1420.85" y="14.9" font-size="13" fill="#eeebe3" font-weight="normal" textLength="132.2" lengthAdjust="spacingAndGlyphs">Direct Display Control</text>
<rect x="973.6" y="89.9" width="694.4" height="557.8" fill="#1b1b1b"/>
<rect x="980.2" y="96.8" width="680.4" height="545.2" fill="#313131"/>
<text x="1278.08" y="115.1" font-size="14.5" fill="#e4e1d6" font-weight="normal" textLength="84.95" lengthAdjust="spacingAndGlyphs">CIE 1976 u'v'</text>
<rect x="1017.7" y="120.2" width="640" height="491.8" fill="#232323"/>
</svg>
<svg id="cief" class="abs" style="left:0;top:0;" width="1668" height="1007"><defs><clipPath id="lc"><path d="M1291.6 598.4 L1291.5 598.4 L1291.2 598.7 L1290.9 598.7 L1290.5 599.0 L1289.9 599.0 L1289.2 599.0 L1288.3 599.0 L1286.7 598.2 L1284.0 596.3 L1280.2 593.5 L1274.8 589.1 L1268.0 583.4 L1259.4 576.3 L1248.2 567.0 L1234.6 555.7 L1217.9 540.7 L1197.9 520.4 L1171.4 488.5 L1140.0 444.8 L1106.0 390.4 L1073.3 331.6 L1047.7 275.2 L1030.4 227.6 L1021.4 192.2 L1019.2 167.6 L1022.7 150.7 L1030.8 139.9 L1042.4 134.4 L1056.1 132.4 L1071.1 131.9 L1086.3 132.1 L1102.2 132.8 L1119.3 134.1 L1137.9 135.8 L1158.4 137.8 L1181.0 140.2 L1206.1 143.0 L1233.8 146.1 L1264.3 149.6 L1297.5 153.4 L1333.4 157.6 L1371.3 161.9 L1410.3 166.4 L1448.1 170.7 L1484.9 174.9 L1518.2 178.7 L1547.6 182.1 L1572.7 185.0 L1593.6 187.4 L1611.3 189.4 L1626.7 191.2 L1639.6 192.7 L1650.1 193.8 L1658.2 194.8 L1664.6 195.5 L1669.3 196.1 L1672.4 196.4 L1675.0 196.7 L1682.7 197.6 Z"/></clipPath><clipPath id="pc"><rect x="1019" y="121.5" width="637.5" height="489.5"/></clipPath></defs><g clip-path="url(#pc)"><g clip-path="url(#lc)"><rect x="1027" y="130" width="130" height="10" fill="#00a000"/>
<rect x="1157" y="130" width="10" height="10" fill="#14a000"/>
<rect x="1167" y="130" width="20" height="10" fill="#28a000"/>
<rect x="1187" y="130" width="10" height="10" fill="#3ca000"/>
<rect x="1017" y="140" width="140" height="10" fill="#00a000"/>
<rect x="1157" y="140" width="10" height="10" fill="#14a000"/>
<rect x="1167" y="140" width="20" height="10" fill="#28a000"/>
<rect x="1187" y="140" width="10" height="10" fill="#3ca000"/>
<rect x="1197" y="140" width="10" height="10" fill="#50a000"/>
<rect x="1207" y="140" width="10" height="10" fill="#64a000"/>
<rect x="1217" y="140" width="10" height="10" fill="#78a000"/>
<rect x="1227" y="140" width="10" height="10" fill="#8ca000"/>
<rect x="1237" y="140" width="10" height="10" fill="#a08c00"/>
<rect x="1247" y="140" width="20" height="10" fill="#a07800"/>
<rect x="1267" y="140" width="10" height="10" fill="#a06400"/>
<rect x="1017" y="150" width="140" height="10" fill="#00a000"/>
<rect x="1157" y="150" width="10" height="10" fill="#14ff00"/>
<rect x="1167" y="150" width="10" height="10" fill="#3cff00"/>
<rect x="1177" y="150" width="10" height="10" fill="#50ff00"/>
<rect x="1187" y="150" width="10" height="10" fill="#64ff00"/>
<rect x="1197" y="150" width="10" height="10" fill="#50a000"/>
<rect x="1207" y="150" width="10" height="10" fill="#64a000"/>
<rect x="1217" y="150" width="10" height="10" fill="#78a000"/>
<rect x="1227" y="150" width="10" height="10" fill="#a0a000"/>
<rect x="1237" y="150" width="10" height="10" fill="#a08c00"/>
<rect x="1247" y="150" width="20" height="10" fill="#a07800"/>
<rect x="1267" y="150" width="10" height="10" fill="#a06400"/>
<rect x="1277" y="150" width="20" height="10" fill="#a05000"/>
<rect x="1297" y="150" width="30" height="10" fill="#a03c00"/>
<rect x="1327" y="150" width="40" height="10" fill="#a02800"/>
<rect x="1017" y="160" width="100" height="10" fill="#00a000"/>
<rect x="1117" y="160" width="40" height="10" fill="#00a014"/>
<rect x="1157" y="160" width="10" height="10" fill="#14ff14"/>
<rect x="1167" y="160" width="10" height="10" fill="#28ff14"/>
<rect x="1177" y="160" width="10" height="10" fill="#50ff14"/>
<rect x="1187" y="160" width="10" height="10" fill="#64ff14"/>
<rect x="1197" y="160" width="10" height="10" fill="#8cff14"/>
<rect x="1207" y="160" width="10" height="10" fill="#a0ff14"/>
<rect x="1217" y="160" width="10" height="10" fill="#c8ff14"/>
<rect x="1227" y="160" width="10" height="10" fill="#f0ff14"/>
<rect x="1237" y="160" width="10" height="10" fill="#ffdc14"/>
<rect x="1247" y="160" width="10" height="10" fill="#ffc800"/>
<rect x="1257" y="160" width="10" height="10" fill="#ffb400"/>
<rect x="1267" y="160" width="10" height="10" fill="#ffa000"/>
<rect x="1277" y="160" width="10" height="10" fill="#ff8c00"/>
<rect x="1287" y="160" width="10" height="10" fill="#ff7800"/>
<rect x="1297" y="160" width="10" height="10" fill="#ff6400"/>
<rect x="1307" y="160" width="20" height="10" fill="#a03c00"/>
<rect x="1327" y="160" width="50" height="10" fill="#a02800"/>
<rect x="1377" y="160" width="70" height="10" fill="#a01400"/>
<rect x="1447" y="160" width="10" height="10" fill="#a00000"/>
<rect x="1017" y="170" width="40" height="10" fill="#00a000"/>
<rect x="1057" y="170" width="80" height="10" fill="#00a014"/>
<rect x="1137" y="170" width="20" height="10" fill="#00a028"/>
<rect x="1157" y="170" width="10" height="10" fill="#14ff3c"/>
<rect x="1167" y="170" width="10" height="10" fill="#28ff3c"/>
<rect x="1177" y="170" width="10" height="10" fill="#50ff3c"/>
<rect x="1187" y="170" width="10" height="10" fill="#64ff3c"/>
<rect x="1197" y="170" width="10" height="10" fill="#8cff28"/>
<rect x="1207" y="170" width="10" height="10" fill="#b4ff28"/>
<rect x="1217" y="170" width="10" height="10" fill="#c8ff28"/>
<rect x="1227" y="170" width="10" height="10" fill="#f0ff28"/>
<rect x="1237" y="170" width="10" height="10" fill="#ffdc28"/>
<rect x="1247" y="170" width="10" height="10" fill="#ffc828"/>
<rect x="1257" y="170" width="10" height="10" fill="#ffa014"/>
<rect x="1267" y="170" width="10" height="10" fill="#ff8c14"/>
<rect x="1277" y="170" width="20" height="10" fill="#ff7814"/>
<rect x="1297" y="170" width="20" height="10" fill="#ff6414"/>
<rect x="1317" y="170" width="20" height="10" fill="#ff5000"/>
<rect x="1337" y="170" width="30" height="10" fill="#ff3c00"/>
<rect x="1367" y="170" width="40" height="10" fill="#ff2800"/>
<rect x="1407" y="170" width="10" height="10" fill="#ff1400"/>
<rect x="1417" y="170" width="20" height="10" fill="#a01400"/>
<rect x="1437" y="170" width="110" height="10" fill="#a00000"/>
<rect x="1017" y="180" width="60" height="10" fill="#00a014"/>
<rect x="1077" y="180" width="80" height="10" fill="#00a028"/>
<rect x="1157" y="180" width="10" height="10" fill="#14ff50"/>
<rect x="1167" y="180" width="10" height="10" fill="#28ff50"/>
<rect x="1177" y="180" width="10" height="10" fill="#50ff50"/>
<rect x="1187" y="180" width="10" height="10" fill="#64ff50"/>
<rect x="1197" y="180" width="10" height="10" fill="#8cff50"/>
<rect x="1207" y="180" width="10" height="10" fill="#b4ff50"/>
<rect x="1217" y="180" width="10" height="10" fill="#c8ff50"/>
<rect x="1227" y="180" width="10" height="10" fill="#ffff50"/>
<rect x="1237" y="180" width="10" height="10" fill="#ffdc3c"/>
<rect x="1247" y="180" width="10" height="10" fill="#ffb43c"/>
<rect x="1257" y="180" width="10" height="10" fill="#ffa03c"/>
<rect x="1267" y="180" width="10" height="10" fill="#ff8c28"/>
<rect x="1277" y="180" width="20" height="10" fill="#ff7828"/>
<rect x="1297" y="180" width="10" height="10" fill="#ff6428"/>
<rect x="1307" y="180" width="20" height="10" fill="#ff5014"/>
<rect x="1327" y="180" width="30" height="10" fill="#ff3c14"/>
<rect x="1357" y="180" width="40" height="10" fill="#ff2814"/>
<rect x="1397" y="180" width="60" height="10" fill="#ff1400"/>
<rect x="1457" y="180" width="40" height="10" fill="#ff0000"/>
<rect x="1497" y="180" width="130" height="10" fill="#a00000"/>
<rect x="1017" y="190" width="80" height="10" fill="#00a028"/>
<rect x="1097" y="190" width="60" height="10" fill="#00a03c"/>
<rect x="1157" y="190" width="10" height="10" fill="#14ff64"/>
<rect x="1167" y="190" width="10" height="10" fill="#28ff64"/>
<rect x="1177" y="190" width="10" height="10" fill="#3cff64"/>
<rect x="1187" y="190" width="10" height="10" fill="#64ff78"/>
<rect x="1197" y="190" width="10" height="10" fill="#8cff78"/>
<rect x="1207" y="190" width="10" height="10" fill="#b4ff78"/>
<rect x="1217" y="190" width="10" height="10" fill="#dcff78"/>
<rect x="1227" y="190" width="10" height="10" fill="#ffff78"/>
<rect x="1237" y="190" width="10" height="10" fill="#ffdc64"/>
<rect x="1247" y="190" width="10" height="10" fill="#ffb450"/>
<rect x="1257" y="190" width="10" height="10" fill="#ffa050"/>
<rect x="1267" y="190" width="10" height="10" fill="#ff8c3c"/>
<rect x="1277" y="190" width="10" height="10" fill="#ff783c"/>
<rect x="1287" y="190" width="10" height="10" fill="#ff643c"/>
<rect x="1297" y="190" width="10" height="10" fill="#ff6428"/>
<rect x="1307" y="190" width="20" height="10" fill="#ff5028"/>
<rect x="1327" y="190" width="30" height="10" fill="#ff3c28"/>
<rect x="1357" y="190" width="40" height="10" fill="#ff2814"/>
<rect x="1397" y="190" width="50" height="10" fill="#ff1414"/>
<rect x="1447" y="190" width="20" height="10" fill="#ff0014"/>
<rect x="1467" y="190" width="20" height="10" fill="#ff0000"/>
<rect x="1487" y="190" width="180" height="10" fill="#a00000"/>
<rect x="1017" y="200" width="20" height="10" fill="#00a028"/>
<rect x="1037" y="200" width="70" height="10" fill="#00a03c"/>
<rect x="1107" y="200" width="50" height="10" fill="#00a050"/>
<rect x="1157" y="200" width="10" height="10" fill="#00ff8c"/>
<rect x="1167" y="200" width="10" height="10" fill="#28ff8c"/>
<rect x="1177" y="200" width="10" height="10" fill="#3cff8c"/>
<rect x="1187" y="200" width="10" height="10" fill="#64ff8c"/>
<rect x="1197" y="200" width="10" height="10" fill="#8cff8c"/>
<rect x="1207" y="200" width="10" height="10" fill="#b4ff8c"/>
<rect x="1217" y="200" width="10" height="10" fill="#dcffa0"/>
<rect x="1227" y="200" width="10" height="10" fill="#fff0a0"/>
<rect x="1237" y="200" width="10" height="10" fill="#ffdc78"/>
<rect x="1247" y="200" width="10" height="10" fill="#ffb478"/>
<rect x="1257" y="200" width="10" height="10" fill="#ffa064"/>
<rect x="1267" y="200" width="10" height="10" fill="#ff8c50"/>
<rect x="1277" y="200" width="10" height="10" fill="#ff7850"/>
<rect x="1287" y="200" width="10" height="10" fill="#ff6450"/>
<rect x="1297" y="200" width="10" height="10" fill="#ff643c"/>
<rect x="1307" y="200" width="20" height="10" fill="#ff503c"/>
<rect x="1327" y="200" width="20" height="10" fill="#ff3c28"/>
<rect x="1347" y="200" width="40" height="10" fill="#ff2828"/>
<rect x="1387" y="200" width="10" height="10" fill="#ff1428"/>
<rect x="1397" y="200" width="40" height="10" fill="#ff1414"/>
<rect x="1437" y="200" width="40" height="10" fill="#ff0014"/>
<rect x="1477" y="200" width="190" height="10" fill="#a00000"/>
<rect x="1017" y="210" width="30" height="10" fill="#00a03c"/>
<rect x="1047" y="210" width="70" height="10" fill="#00a050"/>
<rect x="1117" y="210" width="50" height="10" fill="#00a064"/>
<rect x="1167" y="210" width="10" height="10" fill="#28ffb4"/>
<rect x="1177" y="210" width="10" height="10" fill="#3cffb4"/>
<rect x="1187" y="210" width="10" height="10" fill="#64ffb4"/>
<rect x="1197" y="210" width="10" height="10" fill="#8cffb4"/>
<rect x="1207" y="210" width="10" height="10" fill="#b4ffb4"/>
<rect x="1217" y="210" width="10" height="10" fill="#dcffc8"/>
<rect x="1227" y="210" width="10" height="10" fill="#fff0b4"/>
<rect x="1237" y="210" width="10" height="10" fill="#ffc8a0"/>
<rect x="1247" y="210" width="10" height="10" fill="#ffb48c"/>
<rect x="1257" y="210" width="10" height="10" fill="#ffa078"/>
<rect x="1267" y="210" width="10" height="10" fill="#ff7878"/>
<rect x="1277" y="210" width="10" height="10" fill="#ff7864"/>
<rect x="1287" y="210" width="10" height="10" fill="#ff6464"/>
<rect x="1297" y="210" width="20" height="10" fill="#ff5050"/>
<rect x="1317" y="210" width="10" height="10" fill="#ff3c50"/>
<rect x="1327" y="210" width="20" height="10" fill="#ff3c3c"/>
<rect x="1347" y="210" width="20" height="10" fill="#ff283c"/>
<rect x="1367" y="210" width="10" height="10" fill="#ff2828"/>
<rect x="1377" y="210" width="50" height="10" fill="#ff1428"/>
<rect x="1427" y="210" width="20" height="10" fill="#ff0028"/>
<rect x="1447" y="210" width="20" height="10" fill="#ff0014"/>
<rect x="1467" y="210" width="20" height="10" fill="#a00014"/>
<rect x="1487" y="210" width="180" height="10" fill="#a00000"/>
<rect x="1027" y="220" width="20" height="10" fill="#00a050"/>
<rect x="1047" y="220" width="60" height="10" fill="#00a064"/>
<rect x="1107" y="220" width="60" height="10" fill="#00a078"/>
<rect x="1167" y="220" width="10" height="10" fill="#14ffc8"/>
<rect x="1177" y="220" width="10" height="10" fill="#3cffc8"/>
<rect x="1187" y="220" width="10" height="10" fill="#64ffdc"/>
<rect x="1197" y="220" width="10" height="10" fill="#8cffdc"/>
<rect x="1207" y="220" width="10" height="10" fill="#b4ffdc"/>
<rect x="1217" y="220" width="10" height="10" fill="#dcfff0"/>
<rect x="1227" y="220" width="10" height="10" fill="#fff0dc"/>
<rect x="1237" y="220" width="10" height="10" fill="#ffc8c8"/>
<rect x="1247" y="220" width="10" height="10" fill="#ffb4b4"/>
<rect x="1257" y="220" width="10" height="10" fill="#ff8ca0"/>
<rect x="1267" y="220" width="10" height="10" fill="#ff788c"/>
<rect x="1277" y="220" width="20" height="10" fill="#ff6478"/>
<rect x="1297" y="220" width="20" height="10" fill="#ff5064"/>
<rect x="1317" y="220" width="20" height="10" fill="#ff3c50"/>
<rect x="1337" y="220" width="10" height="10" fill="#ff2850"/>
<rect x="1347" y="220" width="30" height="10" fill="#ff283c"/>
<rect x="1377" y="220" width="20" height="10" fill="#ff143c"/>
<rect x="1397" y="220" width="20" height="10" fill="#ff1428"/>
<rect x="1417" y="220" width="40" height="10" fill="#ff0028"/>
<rect x="1457" y="220" width="40" height="10" fill="#a00014"/>
<rect x="1497" y="220" width="170" height="10" fill="#a00000"/>
<rect x="1027" y="230" width="20" height="10" fill="#00a064"/>
<rect x="1047" y="230" width="60" height="10" fill="#00a078"/>
<rect x="1107" y="230" width="60" height="10" fill="#00a08c"/>
<rect x="1167" y="230" width="10" height="10" fill="#14fff0"/>
<rect x="1177" y="230" width="10" height="10" fill="#3cfff0"/>
<rect x="1187" y="230" width="10" height="10" fill="#64ffff"/>
<rect x="1197" y="230" width="10" height="10" fill="#78f0ff"/>
<rect x="1207" y="230" width="10" height="10" fill="#a0f0ff"/>
<rect x="1217" y="230" width="10" height="10" fill="#c8f0ff"/>
<rect x="1227" y="230" width="10" height="10" fill="#f0dcff"/>
<rect x="1237" y="230" width="10" height="10" fill="#ffc8f0"/>
<rect x="1247" y="230" width="10" height="10" fill="#ffa0c8"/>
<rect x="1257" y="230" width="10" height="10" fill="#ff8cb4"/>
<rect x="1267" y="230" width="10" height="10" fill="#ff78a0"/>
<rect x="1277" y="230" width="10" height="10" fill="#ff648c"/>
<rect x="1287" y="230" width="10" height="10" fill="#ff508c"/>
<rect x="1297" y="230" width="10" height="10" fill="#ff5078"/>
<rect x="1307" y="230" width="10" height="10" fill="#ff3c78"/>
<rect x="1317" y="230" width="20" height="10" fill="#ff3c64"/>
<rect x="1337" y="230" width="30" height="10" fill="#ff2850"/>
<rect x="1367" y="230" width="10" height="10" fill="#ff1450"/>
<rect x="1377" y="230" width="40" height="10" fill="#ff143c"/>
<rect x="1417" y="230" width="20" height="10" fill="#ff003c"/>
<rect x="1437" y="230" width="10" height="10" fill="#ff0028"/>
<rect x="1447" y="230" width="60" height="10" fill="#a00014"/>
<rect x="1507" y="230" width="150" height="10" fill="#a00000"/>
<rect x="1027" y="240" width="20" height="10" fill="#00a078"/>
<rect x="1047" y="240" width="50" height="10" fill="#00a08c"/>
<rect x="1097" y="240" width="60" height="10" fill="#00a0a0"/>
<rect x="1157" y="240" width="10" height="10" fill="#008ca0"/>
<rect x="1167" y="240" width="10" height="10" fill="#14f0ff"/>
<rect x="1177" y="240" width="10" height="10" fill="#28dcff"/>
<rect x="1187" y="240" width="10" height="10" fill="#50dcff"/>
<rect x="1197" y="240" width="10" height="10" fill="#78dcff"/>
<rect x="1207" y="240" width="10" height="10" fill="#8cc8ff"/>
<rect x="1217" y="240" width="10" height="10" fill="#b4c8ff"/>
<rect x="1227" y="240" width="10" height="10" fill="#c8c8ff"/>
<rect x="1237" y="240" width="10" height="10" fill="#f0b4ff"/>
<rect x="1247" y="240" width="10" height="10" fill="#ffa0f0"/>
<rect x="1257" y="240" width="10" height="10" fill="#ff8cc8"/>
<rect x="1267" y="240" width="10" height="10" fill="#ff78b4"/>
<rect x="1277" y="240" width="10" height="10" fill="#ff64a0"/>
<rect x="1287" y="240" width="10" height="10" fill="#ff50a0"/>
<rect x="1297" y="240" width="10" height="10" fill="#ff508c"/>
<rect x="1307" y="240" width="20" height="10" fill="#ff3c78"/>
<rect x="1327" y="240" width="10" height="10" fill="#ff2878"/>
<rect x="1337" y="240" width="20" height="10" fill="#ff2864"/>
<rect x="1357" y="240" width="50" height="10" fill="#ff1450"/>
<rect x="1407" y="240" width="30" height="10" fill="#ff003c"/>
<rect x="1437" y="240" width="20" height="10" fill="#a00028"/>
<rect x="1457" y="240" width="60" height="10" fill="#a00014"/>
<rect x="1517" y="240" width="130" height="10" fill="#a00000"/>
<rect x="1037" y="250" width="60" height="10" fill="#00a0a0"/>
<rect x="1097" y="250" width="60" height="10" fill="#008ca0"/>
<rect x="1157" y="250" width="10" height="10" fill="#0078a0"/>
<rect x="1167" y="250" width="10" height="10" fill="#14c8ff"/>
<rect x="1177" y="250" width="10" height="10" fill="#28c8ff"/>
<rect x="1187" y="250" width="10" height="10" fill="#3cb4ff"/>
<rect x="1197" y="250" width="10" height="10" fill="#64b4ff"/>
<rect x="1207" y="250" width="10" height="10" fill="#78b4ff"/>
<rect x="1217" y="250" width="10" height="10" fill="#a0a0ff"/>
<rect x="1227" y="250" width="10" height="10" fill="#b4a0ff"/>
<rect x="1237" y="250" width="10" height="10" fill="#dca0ff"/>
<rect x="1247" y="250" width="10" height="10" fill="#f08cff"/>
<rect x="1257" y="250" width="10" height="10" fill="#ff78f0"/>
<rect x="1267" y="250" width="10" height="10" fill="#ff78c8"/>
<rect x="1277" y="250" width="10" height="10" fill="#ff64c8"/>
<rect x="1287" y="250" width="10" height="10" fill="#ff50b4"/>
<rect x="1297" y="250" width="10" height="10" fill="#ff50a0"/>
<rect x="1307" y="250" width="20" height="10" fill="#ff3c8c"/>
<rect x="1327" y="250" width="20" height="10" fill="#ff2878"/>
<rect x="1347" y="250" width="10" height="10" fill="#ff2864"/>
<rect x="1357" y="250" width="30" height="10" fill="#ff1464"/>
<rect x="1387" y="250" width="10" height="10" fill="#ff1450"/>
<rect x="1397" y="250" width="30" height="10" fill="#ff0050"/>
<rect x="1427" y="250" width="40" height="10" fill="#a00028"/>
<rect x="1467" y="250" width="60" height="10" fill="#a00014"/>
<rect x="1527" y="250" width="110" height="10" fill="#a00000"/>
<rect x="1037" y="260" width="60" height="10" fill="#008ca0"/>
<rect x="1097" y="260" width="70" height="10" fill="#0078a0"/>
<rect x="1167" y="260" width="10" height="10" fill="#00b4ff"/>
<rect x="1177" y="260" width="10" height="10" fill="#28a0ff"/>
<rect x="1187" y="260" width="10" height="10" fill="#3ca0ff"/>
<rect x="1197" y="260" width="10" height="10" fill="#50a0ff"/>
<rect x="1207" y="260" width="10" height="10" fill="#64a0ff"/>
<rect x="1217" y="260" width="10" height="10" fill="#8c8cff"/>
<rect x="1227" y="260" width="10" height="10" fill="#a08cff"/>
<rect x="1237" y="260" width="10" height="10" fill="#b48cff"/>
<rect x="1247" y="260" width="10" height="10" fill="#dc78ff"/>
<rect x="1257" y="260" width="10" height="10" fill="#f078ff"/>
<rect x="1267" y="260" width="10" height="10" fill="#ff64f0"/>
<rect x="1277" y="260" width="10" height="10" fill="#ff50dc"/>
<rect x="1287" y="260" width="10" height="10" fill="#ff50c8"/>
<rect x="1297" y="260" width="10" height="10" fill="#ff3cb4"/>
<rect x="1307" y="260" width="10" height="10" fill="#ff3ca0"/>
<rect x="1317" y="260" width="10" height="10" fill="#ff28a0"/>
<rect x="1327" y="260" width="20" height="10" fill="#ff288c"/>
<rect x="1347" y="260" width="20" height="10" fill="#ff1478"/>
<rect x="1367" y="260" width="20" height="10" fill="#ff1464"/>
<rect x="1387" y="260" width="20" height="10" fill="#ff0064"/>
<rect x="1407" y="260" width="10" height="10" fill="#ff0050"/>
<rect x="1417" y="260" width="10" height="10" fill="#a0003c"/>
<rect x="1427" y="260" width="50" height="10" fill="#a00028"/>
<rect x="1477" y="260" width="60" height="10" fill="#a00014"/>
<rect x="1537" y="260" width="90" height="10" fill="#a00000"/>
<rect x="1037" y="270" width="80" height="10" fill="#0078a0"/>
<rect x="1117" y="270" width="60" height="10" fill="#0064a0"/>
<rect x="1177" y="270" width="10" height="10" fill="#148cff"/>
<rect x="1187" y="270" width="10" height="10" fill="#288cff"/>
<rect x="1197" y="270" width="10" height="10" fill="#508cff"/>
<rect x="1207" y="270" width="10" height="10" fill="#648cff"/>
<rect x="1217" y="270" width="10" height="10" fill="#7878ff"/>
<rect x="1227" y="270" width="10" height="10" fill="#8c78ff"/>
<rect x="1237" y="270" width="10" height="10" fill="#a078ff"/>
<rect x="1247" y="270" width="10" height="10" fill="#c864ff"/>
<rect x="1257" y="270" width="10" height="10" fill="#dc64ff"/>
<rect x="1267" y="270" width="10" height="10" fill="#f064ff"/>
<rect x="1277" y="270" width="10" height="10" fill="#ff50f0"/>
<rect x="1287" y="270" width="10" height="10" fill="#ff50dc"/>
<rect x="1297" y="270" width="10" height="10" fill="#ff3cc8"/>
<rect x="1307" y="270" width="10" height="10" fill="#ff3cb4"/>
<rect x="1317" y="270" width="20" height="10" fill="#ff28a0"/>
<rect x="1337" y="270" width="20" height="10" fill="#ff148c"/>
<rect x="1357" y="270" width="20" height="10" fill="#ff1478"/>
<rect x="1377" y="270" width="10" height="10" fill="#ff0078"/>
<rect x="1387" y="270" width="20" height="10" fill="#ff0064"/>
<rect x="1407" y="270" width="30" height="10" fill="#a0003c"/>
<rect x="1437" y="270" width="50" height="10" fill="#a00028"/>
<rect x="1487" y="270" width="60" height="10" fill="#a00014"/>
<rect x="1547" y="270" width="70" height="10" fill="#a00000"/>
<rect x="1047" y="280" width="100" height="10" fill="#0064a0"/>
<rect x="1147" y="280" width="30" height="10" fill="#0050a0"/>
<rect x="1177" y="280" width="10" height="10" fill="#148cff"/>
<rect x="1187" y="280" width="10" height="10" fill="#2878ff"/>
<rect x="1197" y="280" width="10" height="10" fill="#3c78ff"/>
<rect x="1207" y="280" width="10" height="10" fill="#5078ff"/>
<rect x="1217" y="280" width="10" height="10" fill="#6478ff"/>
<rect x="1227" y="280" width="10" height="10" fill="#7864ff"/>
<rect x="1237" y="280" width="10" height="10" fill="#a064ff"/>
<rect x="1247" y="280" width="10" height="10" fill="#b464ff"/>
<rect x="1257" y="280" width="10" height="10" fill="#c850ff"/>
<rect x="1267" y="280" width="10" height="10" fill="#dc50ff"/>
<rect x="1277" y="280" width="10" height="10" fill="#f050ff"/>
<rect x="1287" y="280" width="10" height="10" fill="#ff3cf0"/>
<rect x="1297" y="280" width="10" height="10" fill="#ff3cdc"/>
<rect x="1307" y="280" width="10" height="10" fill="#ff28c8"/>
<rect x="1317" y="280" width="20" height="10" fill="#ff28b4"/>
<rect x="1337" y="280" width="20" height="10" fill="#ff14a0"/>
<rect x="1357" y="280" width="10" height="10" fill="#ff148c"/>
<rect x="1367" y="280" width="10" height="10" fill="#ff008c"/>
<rect x="1377" y="280" width="20" height="10" fill="#ff0078"/>
<rect x="1397" y="280" width="10" height="10" fill="#a00050"/>
<rect x="1407" y="280" width="40" height="10" fill="#a0003c"/>
<rect x="1447" y="280" width="50" height="10" fill="#a00028"/>
<rect x="1497" y="280" width="60" height="10" fill="#a00014"/>
<rect x="1557" y="280" width="50" height="10" fill="#a00000"/>
<rect x="1047" y="290" width="30" height="10" fill="#0064a0"/>
<rect x="1077" y="290" width="100" height="10" fill="#0050a0"/>
<rect x="1177" y="290" width="10" height="10" fill="#1478ff"/>
<rect x="1187" y="290" width="10" height="10" fill="#2878ff"/>
<rect x="1197" y="290" width="10" height="10" fill="#3c64ff"/>
<rect x="1207" y="290" width="10" height="10" fill="#5064ff"/>
<rect x="1217" y="290" width="10" height="10" fill="#6464ff"/>
<rect x="1227" y="290" width="10" height="10" fill="#7864ff"/>
<rect x="1237" y="290" width="10" height="10" fill="#8c50ff"/>
<rect x="1247" y="290" width="10" height="10" fill="#a050ff"/>
<rect x="1257" y="290" width="10" height="10" fill="#b450ff"/>
<rect x="1267" y="290" width="10" height="10" fill="#c850ff"/>
<rect x="1277" y="290" width="10" height="10" fill="#dc3cff"/>
<rect x="1287" y="290" width="10" height="10" fill="#f03cff"/>
<rect x="1297" y="290" width="10" height="10" fill="#ff28f0"/>
<rect x="1307" y="290" width="10" height="10" fill="#ff28dc"/>
<rect x="1317" y="290" width="10" height="10" fill="#ff28c8"/>
<rect x="1327" y="290" width="10" height="10" fill="#ff14c8"/>
<rect x="1337" y="290" width="10" height="10" fill="#ff14b4"/>
<rect x="1347" y="290" width="20" height="10" fill="#ff14a0"/>
<rect x="1367" y="290" width="20" height="10" fill="#ff008c"/>
<rect x="1387" y="290" width="30" height="10" fill="#a00050"/>
<rect x="1417" y="290" width="40" height="10" fill="#a0003c"/>
<rect x="1457" y="290" width="50" height="10" fill="#a00028"/>
<rect x="1507" y="290" width="60" height="10" fill="#a00014"/>
<rect x="1567" y="290" width="30" height="10" fill="#a00000"/>
<rect x="1057" y="300" width="100" height="10" fill="#0050a0"/>
<rect x="1157" y="300" width="20" height="10" fill="#003ca0"/>
<rect x="1177" y="300" width="20" height="10" fill="#1464ff"/>
<rect x="1197" y="300" width="10" height="10" fill="#2864ff"/>
<rect x="1207" y="300" width="10" height="10" fill="#3c50ff"/>
<rect x="1217" y="300" width="10" height="10" fill="#5050ff"/>
<rect x="1227" y="300" width="10" height="10" fill="#6450ff"/>
<rect x="1237" y="300" width="10" height="10" fill="#7850ff"/>
<rect x="1247" y="300" width="10" height="10" fill="#8c50ff"/>
<rect x="1257" y="300" width="10" height="10" fill="#a03cff"/>
<rect x="1267" y="300" width="10" height="10" fill="#b43cff"/>
<rect x="1277" y="300" width="10" height="10" fill="#c83cff"/>
<rect x="1287" y="300" width="10" height="10" fill="#dc28ff"/>
<rect x="1297" y="300" width="10" height="10" fill="#f028ff"/>
<rect x="1307" y="300" width="10" height="10" fill="#ff28f0"/>
<rect x="1317" y="300" width="10" height="10" fill="#ff14dc"/>
<rect x="1327" y="300" width="20" height="10" fill="#ff14c8"/>
<rect x="1347" y="300" width="10" height="10" fill="#ff14b4"/>
<rect x="1357" y="300" width="10" height="10" fill="#ff00b4"/>
<rect x="1367" y="300" width="10" height="10" fill="#ff00a0"/>
<rect x="1377" y="300" width="10" height="10" fill="#a00064"/>
<rect x="1387" y="300" width="40" height="10" fill="#a00050"/>
<rect x="1427" y="300" width="40" height="10" fill="#a0003c"/>
<rect x="1467" y="300" width="50" height="10" fill="#a00028"/>
<rect x="1517" y="300" width="60" height="10" fill="#a00014"/>
<rect x="1577" y="300" width="10" height="10" fill="#a00000"/>
<rect x="1057" y="310" width="30" height="10" fill="#0050a0"/>
<rect x="1087" y="310" width="90" height="10" fill="#003ca0"/>
<rect x="1177" y="310" width="10" height="10" fill="#0064ff"/>
<rect x="1187" y="310" width="10" height="10" fill="#1450ff"/>
<rect x="1197" y="310" width="10" height="10" fill="#2850ff"/>
<rect x="1207" y="310" width="10" height="10" fill="#3c50ff"/>
<rect x="1217" y="310" width="10" height="10" fill="#5050ff"/>
<rect x="1227" y="310" width="10" height="10" fill="#6450ff"/>
<rect x="1237" y="310" width="10" height="10" fill="#783cff"/>
<rect x="1247" y="310" width="10" height="10" fill="#8c3cff"/>
<rect x="1257" y="310" width="20" height="10" fill="#a03cff"/>
<rect x="1277" y="310" width="10" height="10" fill="#b428ff"/>
<rect x="1287" y="310" width="10" height="10" fill="#c828ff"/>
<rect x="1297" y="310" width="10" height="10" fill="#dc28ff"/>
<rect x="1307" y="310" width="10" height="10" fill="#f028ff"/>
<rect x="1317" y="310" width="10" height="10" fill="#ff14f0"/>
<rect x="1327" y="310" width="20" height="10" fill="#ff14dc"/>
<rect x="1347" y="310" width="10" height="10" fill="#ff00c8"/>
<rect x="1357" y="310" width="10" height="10" fill="#ff00b4"/>
<rect x="1367" y="310" width="10" height="10" fill="#a00078"/>
<rect x="1377" y="310" width="20" height="10" fill="#a00064"/>
<rect x="1397" y="310" width="40" height="10" fill="#a00050"/>
<rect x="1437" y="310" width="40" height="10" fill="#a0003c"/>
<rect x="1477" y="310" width="50" height="10" fill="#a00028"/>
<rect x="1527" y="310" width="50" height="10" fill="#a00014"/>
<rect x="1057" y="320" width="120" height="10" fill="#003ca0"/>
<rect x="1177" y="320" width="10" height="10" fill="#0050ff"/>
<rect x="1187" y="320" width="10" height="10" fill="#1450ff"/>
<rect x="1197" y="320" width="10" height="10" fill="#2850ff"/>
<rect x="1207" y="320" width="10" height="10" fill="#3c50ff"/>
<rect x="1217" y="320" width="20" height="10" fill="#503cff"/>
<rect x="1237" y="320" width="10" height="10" fill="#643cff"/>
<rect x="1247" y="320" width="10" height="10" fill="#783cff"/>
<rect x="1257" y="320" width="10" height="10" fill="#8c28ff"/>
<rect x="1267" y="320" width="10" height="10" fill="#a028ff"/>
<rect x="1277" y="320" width="10" height="10" fill="#b428ff"/>
<rect x="1287" y="320" width="10" height="10" fill="#c828ff"/>
<rect x="1297" y="320" width="20" height="10" fill="#dc14ff"/>
<rect x="1317" y="320" width="10" height="10" fill="#f014ff"/>
<rect x="1327" y="320" width="10" height="10" fill="#ff14f0"/>
<rect x="1337" y="320" width="20" height="10" fill="#ff00dc"/>
<rect x="1357" y="320" width="30" height="10" fill="#a00078"/>
<rect x="1387" y="320" width="20" height="10" fill="#a00064"/>
<rect x="1407" y="320" width="40" height="10" fill="#a00050"/>
<rect x="1447" y="320" width="40" height="10" fill="#a0003c"/>
<rect x="1487" y="320" width="50" height="10" fill="#a00028"/>
<rect x="1537" y="320" width="30" height="10" fill="#a00014"/>
<rect x="1067" y="330" width="70" height="10" fill="#003ca0"/>
<rect x="1137" y="330" width="50" height="10" fill="#0028a0"/>
<rect x="1187" y="330" width="10" height="10" fill="#143cff"/>
<rect x="1197" y="330" width="20" height="10" fill="#283cff"/>
<rect x="1217" y="330" width="10" height="10" fill="#3c3cff"/>
<rect x="1227" y="330" width="10" height="10" fill="#503cff"/>
<rect x="1237" y="330" width="10" height="10" fill="#6428ff"/>
<rect x="1247" y="330" width="20" height="10" fill="#7828ff"/>
<rect x="1267" y="330" width="10" height="10" fill="#8c28ff"/>
<rect x="1277" y="330" width="10" height="10" fill="#a028ff"/>
<rect x="1287" y="330" width="10" height="10" fill="#b414ff"/>
<rect x="1297" y="330" width="10" height="10" fill="#c814ff"/>
<rect x="1307" y="330" width="10" height="10" fill="#dc14ff"/>
<rect x="1317" y="330" width="10" height="10" fill="#f014ff"/>
<rect x="1327" y="330" width="10" height="10" fill="#f000ff"/>
<rect x="1337" y="330" width="10" height="10" fill="#ff00f0"/>
<rect x="1347" y="330" width="20" height="10" fill="#a0008c"/>
<rect x="1367" y="330" width="30" height="10" fill="#a00078"/>
<rect x="1397" y="330" width="20" height="10" fill="#a00064"/>
<rect x="1417" y="330" width="40" height="10" fill="#a00050"/>
<rect x="1457" y="330" width="40" height="10" fill="#a0003c"/>
<rect x="1497" y="330" width="50" height="10" fill="#a00028"/>
<rect x="1547" y="330" width="10" height="10" fill="#a00014"/>
<rect x="1067" y="340" width="10" height="10" fill="#003ca0"/>
<rect x="1077" y="340" width="110" height="10" fill="#0028a0"/>
<rect x="1187" y="340" width="20" height="10" fill="#143cff"/>
<rect x="1207" y="340" width="10" height="10" fill="#283cff"/>
<rect x="1217" y="340" width="10" height="10" fill="#3c28ff"/>
<rect x="1227" y="340" width="20" height="10" fill="#5028ff"/>
<rect x="1247" y="340" width="10" height="10" fill="#6428ff"/>
<rect x="1257" y="340" width="10" height="10" fill="#7828ff"/>
<rect x="1267" y="340" width="10" height="10" fill="#8c28ff"/>
<rect x="1277" y="340" width="20" height="10" fill="#a014ff"/>
<rect x="1297" y="340" width="10" height="10" fill="#b414ff"/>
<rect x="1307" y="340" width="10" height="10" fill="#c814ff"/>
<rect x="1317" y="340" width="10" height="10" fill="#dc00ff"/>
<rect x="1327" y="340" width="10" height="10" fill="#f000ff"/>
<rect x="1337" y="340" width="20" height="10" fill="#a000a0"/>
<rect x="1357" y="340" width="20" height="10" fill="#a0008c"/>
<rect x="1377" y="340" width="30" height="10" fill="#a00078"/>
<rect x="1407" y="340" width="20" height="10" fill="#a00064"/>
<rect x="1427" y="340" width="40" height="10" fill="#a00050"/>
<rect x="1467" y="340" width="40" height="10" fill="#a0003c"/>
<rect x="1507" y="340" width="40" height="10" fill="#a00028"/>
<rect x="1077" y="350" width="110" height="10" fill="#0028a0"/>
<rect x="1187" y="350" width="20" height="10" fill="#143cff"/>
<rect x="1207" y="350" width="10" height="10" fill="#2828ff"/>
<rect x="1217" y="350" width="20" height="10" fill="#3c28ff"/>
<rect x="1237" y="350" width="10" height="10" fill="#5028ff"/>
<rect x="1247" y="350" width="10" height="10" fill="#6428ff"/>
<rect x="1257" y="350" width="20" height="10" fill="#7814ff"/>
<rect x="1277" y="350" width="10" height="10" fill="#8c14ff"/>
<rect x="1287" y="350" width="20" height="10" fill="#a014ff"/>
<rect x="1307" y="350" width="10" height="10" fill="#b400ff"/>
<rect x="1317" y="350" width="10" height="10" fill="#c800ff"/>
<rect x="1327" y="350" width="20" height="10" fill="#8c00a0"/>
<rect x="1347" y="350" width="20" height="10" fill="#a000a0"/>
<rect x="1367" y="350" width="20" height="10" fill="#a0008c"/>
<rect x="1387" y="350" width="30" height="10" fill="#a00078"/>
<rect x="1417" y="350" width="20" height="10" fill="#a00064"/>
<rect x="1437" y="350" width="40" height="10" fill="#a00050"/>
<rect x="1477" y="350" width="40" height="10" fill="#a0003c"/>
<rect x="1517" y="350" width="20" height="10" fill="#a00028"/>
<rect x="1087" y="360" width="100" height="10" fill="#0028a0"/>
<rect x="1187" y="360" width="10" height="10" fill="#0028ff"/>
<rect x="1197" y="360" width="10" height="10" fill="#1428ff"/>
<rect x="1207" y="360" width="20" height="10" fill="#2828ff"/>
<rect x="1227" y="360" width="10" height="10" fill="#3c28ff"/>
<rect x="1237" y="360" width="10" height="10" fill="#5028ff"/>
<rect x="1247" y="360" width="10" height="10" fill="#5014ff"/>
<rect x="1257" y="360" width="10" height="10" fill="#6414ff"/>
<rect x="1267" y="360" width="10" height="10" fill="#7814ff"/>
<rect x="1277" y="360" width="20" height="10" fill="#8c14ff"/>
<rect x="1297" y="360" width="10" height="10" fill="#a000ff"/>
<rect x="1307" y="360" width="10" height="10" fill="#b400ff"/>
<rect x="1317" y="360" width="20" height="10" fill="#7800a0"/>
<rect x="1337" y="360" width="20" height="10" fill="#8c00a0"/>
<rect x="1357" y="360" width="20" height="10" fill="#a000a0"/>
<rect x="1377" y="360" width="20" height="10" fill="#a0008c"/>
<rect x="1397" y="360" width="30" height="10" fill="#a00078"/>
<rect x="1427" y="360" width="20" height="10" fill="#a00064"/>
<rect x="1447" y="360" width="40" height="10" fill="#a00050"/>
<rect x="1487" y="360" width="40" height="10" fill="#a0003c"/>
<rect x="1087" y="370" width="70" height="10" fill="#0028a0"/>
<rect x="1157" y="370" width="30" height="10" fill="#0014a0"/>
<rect x="1187" y="370" width="10" height="10" fill="#0028ff"/>
<rect x="1197" y="370" width="10" height="10" fill="#1428ff"/>
<rect x="1207" y="370" width="20" height="10" fill="#2828ff"/>
<rect x="1227" y="370" width="10" height="10" fill="#3c14ff"/>
<rect x="1237" y="370" width="20" height="10" fill="#5014ff"/>
<rect x="1257" y="370" width="20" height="10" fill="#6414ff"/>
<rect x="1277" y="370" width="10" height="10" fill="#7814ff"/>
<rect x="1287" y="370" width="10" height="10" fill="#8c00ff"/>
<rect x="1297" y="370" width="10" height="10" fill="#a000ff"/>
<rect x="1307" y="370" width="10" height="10" fill="#6400a0"/>
<rect x="1317" y="370" width="30" height="10" fill="#7800a0"/>
<rect x="1347" y="370" width="20" height="10" fill="#8c00a0"/>
<rect x="1367" y="370" width="20" height="10" fill="#a000a0"/>
<rect x="1387" y="370" width="20" height="10" fill="#a0008c"/>
<rect x="1407" y="370" width="30" height="10" fill="#a00078"/>
<rect x="1437" y="370" width="20" height="10" fill="#a00064"/>
<rect x="1457" y="370" width="40" height="10" fill="#a00050"/>
<rect x="1497" y="370" width="20" height="10" fill="#a0003c"/>
<rect x="1097" y="380" width="90" height="10" fill="#0014a0"/>
<rect x="1187" y="380" width="10" height="10" fill="#0028ff"/>
<rect x="1197" y="380" width="20" height="10" fill="#1428ff"/>
<rect x="1217" y="380" width="10" height="10" fill="#2814ff"/>
<rect x="1227" y="380" width="20" height="10" fill="#3c14ff"/>
<rect x="1247" y="380" width="20" height="10" fill="#5014ff"/>
<rect x="1267" y="380" width="10" height="10" fill="#6400ff"/>
<rect x="1277" y="380" width="20" height="10" fill="#7800ff"/>
<rect x="1297" y="380" width="10" height="10" fill="#5000a0"/>
<rect x="1307" y="380" width="20" height="10" fill="#6400a0"/>
<rect x="1327" y="380" width="30" height="10" fill="#7800a0"/>
<rect x="1357" y="380" width="20" height="10" fill="#8c00a0"/>
<rect x="1377" y="380" width="20" height="10" fill="#a000a0"/>
<rect x="1397" y="380" width="20" height="10" fill="#a0008c"/>
<rect x="1417" y="380" width="30" height="10" fill="#a00078"/>
<rect x="1447" y="380" width="20" height="10" fill="#a00064"/>
<rect x="1467" y="380" width="40" height="10" fill="#a00050"/>
<rect x="1097" y="390" width="100" height="10" fill="#0014a0"/>
<rect x="1197" y="390" width="20" height="10" fill="#1414ff"/>
<rect x="1217" y="390" width="20" height="10" fill="#2814ff"/>
<rect x="1237" y="390" width="10" height="10" fill="#3c14ff"/>
<rect x="1247" y="390" width="10" height="10" fill="#5014ff"/>
<rect x="1257" y="390" width="10" height="10" fill="#5000ff"/>
<rect x="1267" y="390" width="20" height="10" fill="#6400ff"/>
<rect x="1287" y="390" width="30" height="10" fill="#5000a0"/>
<rect x="1317" y="390" width="20" height="10" fill="#6400a0"/>
<rect x="1337" y="390" width="30" height="10" fill="#7800a0"/>
<rect x="1367" y="390" width="20" height="10" fill="#8c00a0"/>
<rect x="1387" y="390" width="20" height="10" fill="#a000a0"/>
<rect x="1407" y="390" width="20" height="10" fill="#a0008c"/>
<rect x="1427" y="390" width="30" height="10" fill="#a00078"/>
<rect x="1457" y="390" width="20" height="10" fill="#a00064"/>
<rect x="1477" y="390" width="20" height="10" fill="#a00050"/>
<rect x="1107" y="400" width="90" height="10" fill="#0014a0"/>
<rect x="1197" y="400" width="20" height="10" fill="#1414ff"/>
<rect x="1217" y="400" width="20" height="10" fill="#2814ff"/>
<rect x="1237" y="400" width="10" height="10" fill="#3c14ff"/>
<rect x="1247" y="400" width="10" height="10" fill="#3c00ff"/>
<rect x="1257" y="400" width="20" height="10" fill="#5000ff"/>
<rect x="1277" y="400" width="20" height="10" fill="#3c00a0"/>
<rect x="1297" y="400" width="30" height="10" fill="#5000a0"/>
<rect x="1327" y="400" width="20" height="10" fill="#6400a0"/>
<rect x="1347" y="400" width="30" height="10" fill="#7800a0"/>
<rect x="1377" y="400" width="20" height="10" fill="#8c00a0"/>
<rect x="1397" y="400" width="20" height="10" fill="#a000a0"/>
<rect x="1417" y="400" width="20" height="10" fill="#a0008c"/>
<rect x="1437" y="400" width="30" height="10" fill="#a00078"/>
<rect x="1467" y="400" width="20" height="10" fill="#a00064"/>
<rect x="1117" y="410" width="80" height="10" fill="#0014a0"/>
<rect x="1197" y="410" width="10" height="10" fill="#0014ff"/>
<rect x="1207" y="410" width="10" height="10" fill="#1414ff"/>
<rect x="1217" y="410" width="20" height="10" fill="#2814ff"/>
<rect x="1237" y="410" width="20" height="10" fill="#3c00ff"/>
<rect x="1257" y="410" width="10" height="10" fill="#5000ff"/>
<rect x="1267" y="410" width="40" height="10" fill="#3c00a0"/>
<rect x="1307" y="410" width="30" height="10" fill="#5000a0"/>
<rect x="1337" y="410" width="20" height="10" fill="#6400a0"/>
<rect x="1357" y="410" width="30" height="10" fill="#7800a0"/>
<rect x="1387" y="410" width="20" height="10" fill="#8c00a0"/>
<rect x="1407" y="410" width="20" height="10" fill="#a000a0"/>
<rect x="1427" y="410" width="20" height="10" fill="#a0008c"/>
<rect x="1447" y="410" width="30" height="10" fill="#a00078"/>
<rect x="1117" y="420" width="80" height="10" fill="#0014a0"/>
<rect x="1197" y="420" width="10" height="10" fill="#0014ff"/>
<rect x="1207" y="420" width="20" height="10" fill="#1414ff"/>
<rect x="1227" y="420" width="20" height="10" fill="#2800ff"/>
<rect x="1247" y="420" width="10" height="10" fill="#3c00ff"/>
<rect x="1257" y="420" width="20" height="10" fill="#2800a0"/>
<rect x="1277" y="420" width="40" height="10" fill="#3c00a0"/>
<rect x="1317" y="420" width="30" height="10" fill="#5000a0"/>
<rect x="1347" y="420" width="20" height="10" fill="#6400a0"/>
<rect x="1367" y="420" width="30" height="10" fill="#7800a0"/>
<rect x="1397" y="420" width="20" height="10" fill="#8c00a0"/>
<rect x="1417" y="420" width="20" height="10" fill="#a000a0"/>
<rect x="1437" y="420" width="20" height="10" fill="#a0008c"/>
<rect x="1457" y="420" width="20" height="10" fill="#a00078"/>
<rect x="1127" y="430" width="40" height="10" fill="#0014a0"/>
<rect x="1167" y="430" width="30" height="10" fill="#0000a0"/>
<rect x="1197" y="430" width="10" height="10" fill="#0014ff"/>
<rect x="1207" y="430" width="10" height="10" fill="#1414ff"/>
<rect x="1217" y="430" width="10" height="10" fill="#1400ff"/>
<rect x="1227" y="430" width="20" height="10" fill="#2800ff"/>
<rect x="1247" y="430" width="40" height="10" fill="#2800a0"/>
<rect x="1287" y="430" width="40" height="10" fill="#3c00a0"/>
<rect x="1327" y="430" width="30" height="10" fill="#5000a0"/>
<rect x="1357" y="430" width="20" height="10" fill="#6400a0"/>
<rect x="1377" y="430" width="30" height="10" fill="#7800a0"/>
<rect x="1407" y="430" width="20" height="10" fill="#8c00a0"/>
<rect x="1427" y="430" width="20" height="10" fill="#a000a0"/>
<rect x="1447" y="430" width="20" height="10" fill="#a0008c"/>
<rect x="1127" y="440" width="70" height="10" fill="#0000a0"/>
<rect x="1197" y="440" width="10" height="10" fill="#0014ff"/>
<rect x="1207" y="440" width="20" height="10" fill="#1400ff"/>
<rect x="1227" y="440" width="10" height="10" fill="#2800ff"/>
<rect x="1237" y="440" width="10" height="10" fill="#1400a0"/>
<rect x="1247" y="440" width="50" height="10" fill="#2800a0"/>
<rect x="1297" y="440" width="40" height="10" fill="#3c00a0"/>
<rect x="1337" y="440" width="30" height="10" fill="#5000a0"/>
<rect x="1367" y="440" width="20" height="10" fill="#6400a0"/>
<rect x="1387" y="440" width="30" height="10" fill="#7800a0"/>
<rect x="1417" y="440" width="20" height="10" fill="#8c00a0"/>
<rect x="1437" y="440" width="20" height="10" fill="#a000a0"/>
<rect x="1137" y="450" width="60" height="10" fill="#0000a0"/>
<rect x="1197" y="450" width="10" height="10" fill="#0000ff"/>
<rect x="1207" y="450" width="20" height="10" fill="#1400ff"/>
<rect x="1227" y="450" width="30" height="10" fill="#1400a0"/>
<rect x="1257" y="450" width="50" height="10" fill="#2800a0"/>
<rect x="1307" y="450" width="40" height="10" fill="#3c00a0"/>
<rect x="1347" y="450" width="30" height="10" fill="#5000a0"/>
<rect x="1377" y="450" width="20" height="10" fill="#6400a0"/>
<rect x="1397" y="450" width="30" height="10" fill="#7800a0"/>
<rect x="1427" y="450" width="20" height="10" fill="#8c00a0"/>
<rect x="1147" y="460" width="60" height="10" fill="#0000a0"/>
<rect x="1207" y="460" width="10" height="10" fill="#0000ff"/>
<rect x="1217" y="460" width="50" height="10" fill="#1400a0"/>
<rect x="1267" y="460" width="50" height="10" fill="#2800a0"/>
<rect x="1317" y="460" width="40" height="10" fill="#3c00a0"/>
<rect x="1357" y="460" width="30" height="10" fill="#5000a0"/>
<rect x="1387" y="460" width="20" height="10" fill="#6400a0"/>
<rect x="1407" y="460" width="30" height="10" fill="#7800a0"/>
<rect x="1147" y="470" width="80" height="10" fill="#0000a0"/>
<rect x="1227" y="470" width="50" height="10" fill="#1400a0"/>
<rect x="1277" y="470" width="50" height="10" fill="#2800a0"/>
<rect x="1327" y="470" width="40" height="10" fill="#3c00a0"/>
<rect x="1367" y="470" width="30" height="10" fill="#5000a0"/>
<rect x="1397" y="470" width="20" height="10" fill="#6400a0"/>
<rect x="1417" y="470" width="10" height="10" fill="#7800a0"/>
<rect x="1157" y="480" width="80" height="10" fill="#0000a0"/>
<rect x="1237" y="480" width="50" height="10" fill="#1400a0"/>
<rect x="1287" y="480" width="50" height="10" fill="#2800a0"/>
<rect x="1337" y="480" width="40" height="10" fill="#3c00a0"/>
<rect x="1377" y="480" width="30" height="10" fill="#5000a0"/>
<rect x="1407" y="480" width="10" height="10" fill="#6400a0"/>
<rect x="1167" y="490" width="80" height="10" fill="#0000a0"/>
<rect x="1247" y="490" width="60" height="10" fill="#1400a0"/>
<rect x="1307" y="490" width="40" height="10" fill="#2800a0"/>
<rect x="1347" y="490" width="40" height="10" fill="#3c00a0"/>
<rect x="1387" y="490" width="20" height="10" fill="#5000a0"/>
<rect x="1177" y="500" width="80" height="10" fill="#0000a0"/>
<rect x="1257" y="500" width="60" height="10" fill="#1400a0"/>
<rect x="1317" y="500" width="40" height="10" fill="#2800a0"/>
<rect x="1357" y="500" width="40" height="10" fill="#3c00a0"/>
<rect x="1187" y="510" width="80" height="10" fill="#0000a0"/>
<rect x="1267" y="510" width="60" height="10" fill="#1400a0"/>
<rect x="1327" y="510" width="40" height="10" fill="#2800a0"/>
<rect x="1367" y="510" width="20" height="10" fill="#3c00a0"/>
<rect x="1187" y="520" width="90" height="10" fill="#0000a0"/>
<rect x="1277" y="520" width="60" height="10" fill="#1400a0"/>
<rect x="1337" y="520" width="40" height="10" fill="#2800a0"/>
<rect x="1197" y="530" width="100" height="10" fill="#0000a0"/>
<rect x="1297" y="530" width="50" height="10" fill="#1400a0"/>
<rect x="1347" y="530" width="20" height="10" fill="#2800a0"/>
<rect x="1207" y="540" width="100" height="10" fill="#0000a0"/>
<rect x="1307" y="540" width="50" height="10" fill="#1400a0"/>
<rect x="1217" y="550" width="100" height="10" fill="#0000a0"/>
<rect x="1317" y="550" width="30" height="10" fill="#1400a0"/>
<rect x="1237" y="560" width="90" height="10" fill="#0000a0"/>
<rect x="1327" y="560" width="10" height="10" fill="#1400a0"/>
<rect x="1247" y="570" width="80" height="10" fill="#0000a0"/>
<rect x="1257" y="580" width="60" height="10" fill="#0000a0"/>
<rect x="1267" y="590" width="40" height="10" fill="#0000a0"/></g></g></svg>
<canvas id="cie" class="abs" style="left:1017px;top:120px;" width="641" height="493"></canvas>
<script>
var GAMMA=1.0;
(function(){
var locus=[[0.1741,0.0050],[0.1740,0.0050],[0.1738,0.0049],[0.1736,0.0049],[0.1733,0.0048],[0.1730,0.0048],[0.1726,0.0048],[0.1721,0.0048],[0.1714,0.0051],[0.1703,0.0058],[0.1689,0.0069],[0.1669,0.0086],[0.1644,0.0109],[0.1611,0.0138],[0.1566,0.0177],[0.1510,0.0227],[0.1440,0.0297],[0.1355,0.0399],[0.1241,0.0578],[0.1096,0.0868],[0.0913,0.1327],[0.0687,0.2007],[0.0454,0.2950],[0.0235,0.4127],[0.0082,0.5384],[0.0039,0.6548],[0.0139,0.7502],[0.0389,0.8120],[0.0743,0.8338],[0.1142,0.8262],[0.1547,0.8059],[0.1929,0.7816],[0.2296,0.7543],[0.2658,0.7243],[0.3016,0.6923],[0.3373,0.6589],[0.3731,0.6245],[0.4087,0.5896],[0.4441,0.5547],[0.4788,0.5202],[0.5125,0.4866],[0.5448,0.4544],[0.5752,0.4242],[0.6029,0.3965],[0.6270,0.3725],[0.6482,0.3514],[0.6658,0.3340],[0.6801,0.3197],[0.6915,0.3083],[0.7006,0.2993],[0.7079,0.2920],[0.7140,0.2859],[0.7190,0.2809],[0.7230,0.2770],[0.7260,0.2740],[0.7283,0.2717],[0.7300,0.2700],[0.7311,0.2689],[0.7320,0.2680],[0.7347,0.2653]];
var OX=1017, OY=120, CW=641, CH=493;
function PX(u){return 1017.7+u*1066.7-OX;}
function PY(v){return 612-v*818.2-OY;}
var cv=document.getElementById('cie');
var ctx=cv.getContext('2d');
var SS=2; var off=document.createElement('canvas'); off.width=CW*SS; off.height=CH*SS;
var oc=off.getContext('2d');
var img=oc.createImageData(CW*SS,CH*SS);
var d=img.data;
// triangle (pixel coords relative)
var TR=[[1500-OX,182.3-OY],[1153.4-OX,151-OY],[1205.5-OX,479-OY]];
function side(ax,ay,bx,by,px,py){return (bx-ax)*(py-ay)-(by-ay)*(px-ax);}
function g(c){c=c<0?0:c; return Math.pow(c,GAMMA);}
function colAt(px,py,out){
  var u=(px+OX-1017.7)/1066.7, v=(612-(py+OY))/818.2;
  var den=6*u-16*v+12; var x=9*u/den, y=4*v/den;
  var X=x/y, Y=1, Z=(1-x-y)/y;
  var r=3.2406*X-1.5372*Y-0.4986*Z, gg=-0.9689*X+1.8758*Y+0.0415*Z, b=0.0557*X-0.2040*Y+1.0570*Z;
  if(r<0)r=0; if(gg<0)gg=0; if(b<0)b=0;
  var m=Math.max(r,gg,b); r/=m; gg/=m; b/=m;
  out[0]=g(r); out[1]=g(gg); out[2]=g(b);
}
function proj(ax,ay,bx,by,px,py){
  var dx=bx-ax, dy=by-ay; var t=((px-ax)*dx+(py-ay)*dy)/(dx*dx+dy*dy);
  if(t<0)t=0; if(t>1)t=1; return [ax+t*dx, ay+t*dy, (px-ax-t*dx)*(px-ax-t*dx)+(py-ay-t*dy)*(py-ay-t*dy)];
}
var c=[0,0,0];
var s0=side(TR[0][0],TR[0][1],TR[1][0],TR[1][1],TR[2][0],TR[2][1]);
var CWS=CW*SS, CHS=CH*SS;
for(var j=0;j<CHS;j++){
 for(var i=0;i<CWS;i++){
  var px=(i+0.5)/SS, py=(j+0.5)/SS;
  var inside=true;
  for(var k=0;k<3;k++){
    var a=TR[k], bb=TR[(k+1)%3];
    if(side(a[0],a[1],bb[0],bb[1],px,py)*s0<0){inside=false;break;}
  }
  var f=1;
  if(inside){ colAt(px,py,c); }
  else {
    var best=null;
    for(var k=0;k<3;k++){
      var a=TR[k], bb=TR[(k+1)%3];
      var p=proj(a[0],a[1],bb[0],bb[1],px,py);
      if(best===null||p[2]<best[2]) best=p;
    }
    colAt(best[0],best[1],c); f=0.63;
  }
  var idx=(j*CWS+i)*4;
  d[idx]=c[0]*255*f; d[idx+1]=c[1]*255*f; d[idx+2]=c[2]*255*f; d[idx+3]=255;
 }
}
oc.putImageData(img,0,0);
ctx.save();
ctx.beginPath();
var first=true;
for(var k=0;k<locus.length;k++){
  var x=locus[k][0], y=locus[k][1]; var den=-2*x+12*y+3; var u=4*x/den, v=9*y/den;
  var X=PX(u), Y=PY(v);
  if(first){ctx.moveTo(X,Y);first=false;} else ctx.lineTo(X,Y);
}
ctx.closePath();
ctx.rect(0.7,0.2,CW-1.2,CH-1.2);
ctx.restore(); ctx.save();
ctx.beginPath();
ctx.rect(1.5,1.5,CW-2.5,CH-2.5);
ctx.clip();
ctx.beginPath();
var P=[];
for(var k=0;k<locus.length;k++){
  var x=locus[k][0], y=locus[k][1]; var den=-2*x+12*y+3; var u=4*x/den, v=9*y/den;
  P.push([PX(u),PY(v)]);
}
ctx.moveTo(P[0][0],P[0][1]);
for(var k=0;k<P.length-1;k++){
  var p0=P[Math.max(0,k-1)], p1=P[k], p2=P[k+1], p3=P[Math.min(P.length-1,k+2)];
  for(var s=1;s<=8;s++){
    var t=s/8, t2=t*t, t3=t2*t;
    var xx=0.5*((2*p1[0])+(-p0[0]+p2[0])*t+(2*p0[0]-5*p1[0]+4*p2[0]-p3[0])*t2+(-p0[0]+3*p1[0]-3*p2[0]+p3[0])*t3);
    var yy=0.5*((2*p1[1])+(-p0[1]+p2[1])*t+(2*p0[1]-5*p1[1]+4*p2[1]-p3[1])*t2+(-p0[1]+3*p1[1]-3*p2[1]+p3[1])*t3);
    ctx.lineTo(xx,yy);
  }
}
ctx.closePath();
ctx.clip();
ctx.imageSmoothingEnabled=true; ctx.imageSmoothingQuality='high'; ctx.drawImage(off,0,0,CW,CH);
ctx.restore();
var fb=document.getElementById('cief'); if(fb) fb.style.display='none';
})();
</script>
<svg class="abs" style="left:0;top:0;" width="1668" height="1007">
<rect x="1017.7" y="120.2" width="640" height="491.8" fill="none" stroke="#a0a0a0" stroke-width="1.5"/>
<line x1="1012" y1="612" x2="1017.7" y2="612" stroke="#c8c8c8" stroke-width="1.5" />
<text x="1011" y="618.5" font-size="14" text-anchor="end" fill="#e4e1d6" font-weight="normal" >0</text>
<line x1="1012" y1="571.09" x2="1017.7" y2="571.09" stroke="#c8c8c8" stroke-width="1.5" />
<text x="1011" y="577.59" font-size="14" text-anchor="end" fill="#e4e1d6" font-weight="normal" >0,05</text>
<line x1="1012" y1="530.18" x2="1017.7" y2="530.18" stroke="#c8c8c8" stroke-width="1.5" />
<text x="1011" y="536.68" font-size="14" text-anchor="end" fill="#e4e1d6" font-weight="normal" >0,1</text>
<line x1="1012" y1="489.27" x2="1017.7" y2="489.27" stroke="#c8c8c8" stroke-width="1.5" />
<text x="1011" y="495.77" font-size="14" text-anchor="end" fill="#e4e1d6" font-weight="normal" >0,15</text>
<line x1="1012" y1="448.36" x2="1017.7" y2="448.36" stroke="#c8c8c8" stroke-width="1.5" />
<text x="1011" y="454.86" font-size="14" text-anchor="end" fill="#e4e1d6" font-weight="normal" >0,2</text>
<line x1="1012" y1="407.45" x2="1017.7" y2="407.45" stroke="#c8c8c8" stroke-width="1.5" />
<text x="1011" y="413.95" font-size="14" text-anchor="end" fill="#e4e1d6" font-weight="normal" >0,25</text>
<line x1="1012" y1="366.54" x2="1017.7" y2="366.54" stroke="#c8c8c8" stroke-width="1.5" />
<text x="1011" y="373.04" font-size="14" text-anchor="end" fill="#e4e1d6" font-weight="normal" >0,3</text>
<line x1="1012" y1="325.63" x2="1017.7" y2="325.63" stroke="#c8c8c8" stroke-width="1.5" />
<text x="1011" y="332.13" font-size="14" text-anchor="end" fill="#e4e1d6" font-weight="normal" >0,35</text>
<line x1="1012" y1="284.72" x2="1017.7" y2="284.72" stroke="#c8c8c8" stroke-width="1.5" />
<text x="1011" y="291.22" font-size="14" text-anchor="end" fill="#e4e1d6" font-weight="normal" >0,4</text>
<line x1="1012" y1="243.81" x2="1017.7" y2="243.81" stroke="#c8c8c8" stroke-width="1.5" />
<text x="1011" y="250.31" font-size="14" text-anchor="end" fill="#e4e1d6" font-weight="normal" >0,45</text>
<line x1="1012" y1="202.9" x2="1017.7" y2="202.9" stroke="#c8c8c8" stroke-width="1.5" />
<text x="1011" y="209.4" font-size="14" text-anchor="end" fill="#e4e1d6" font-weight="normal" >0,5</text>
<line x1="1012" y1="161.99" x2="1017.7" y2="161.99" stroke="#c8c8c8" stroke-width="1.5" />
<text x="1011" y="168.49" font-size="14" text-anchor="end" fill="#e4e1d6" font-weight="normal" >0,55</text>
<line x1="1017.7" y1="612" x2="1017.7" y2="618" stroke="#c8c8c8" stroke-width="1.5" />
<text x="1017.7" y="634" font-size="14" text-anchor="middle" fill="#e4e1d6" font-weight="normal" >0</text>
<line x1="1071.04" y1="612" x2="1071.04" y2="618" stroke="#c8c8c8" stroke-width="1.5" />
<text x="1071.04" y="634" font-size="14" text-anchor="middle" fill="#e4e1d6" font-weight="normal" >0,05</text>
<line x1="1124.37" y1="612" x2="1124.37" y2="618" stroke="#c8c8c8" stroke-width="1.5" />
<text x="1124.37" y="634" font-size="14" text-anchor="middle" fill="#e4e1d6" font-weight="normal" >0,1</text>
<line x1="1177.71" y1="612" x2="1177.71" y2="618" stroke="#c8c8c8" stroke-width="1.5" />
<text x="1177.71" y="634" font-size="14" text-anchor="middle" fill="#e4e1d6" font-weight="normal" >0,15</text>
<line x1="1231.04" y1="612" x2="1231.04" y2="618" stroke="#c8c8c8" stroke-width="1.5" />
<text x="1231.04" y="634" font-size="14" text-anchor="middle" fill="#e4e1d6" font-weight="normal" >0,2</text>
<line x1="1284.38" y1="612" x2="1284.38" y2="618" stroke="#c8c8c8" stroke-width="1.5" />
<text x="1284.38" y="634" font-size="14" text-anchor="middle" fill="#e4e1d6" font-weight="normal" >0,25</text>
<line x1="1337.71" y1="612" x2="1337.71" y2="618" stroke="#c8c8c8" stroke-width="1.5" />
<text x="1337.71" y="634" font-size="14" text-anchor="middle" fill="#e4e1d6" font-weight="normal" >0,3</text>
<line x1="1391.05" y1="612" x2="1391.05" y2="618" stroke="#c8c8c8" stroke-width="1.5" />
<text x="1391.05" y="634" font-size="14" text-anchor="middle" fill="#e4e1d6" font-weight="normal" >0,35</text>
<line x1="1444.38" y1="612" x2="1444.38" y2="618" stroke="#c8c8c8" stroke-width="1.5" />
<text x="1444.38" y="634" font-size="14" text-anchor="middle" fill="#e4e1d6" font-weight="normal" >0,4</text>
<line x1="1497.72" y1="612" x2="1497.72" y2="618" stroke="#c8c8c8" stroke-width="1.5" />
<text x="1497.72" y="634" font-size="14" text-anchor="middle" fill="#e4e1d6" font-weight="normal" >0,45</text>
<line x1="1551.05" y1="612" x2="1551.05" y2="618" stroke="#c8c8c8" stroke-width="1.5" />
<text x="1551.05" y="634" font-size="14" text-anchor="middle" fill="#e4e1d6" font-weight="normal" >0,5</text>
<line x1="1604.39" y1="612" x2="1604.39" y2="618" stroke="#c8c8c8" stroke-width="1.5" />
<text x="1604.39" y="634" font-size="14" text-anchor="middle" fill="#e4e1d6" font-weight="normal" >0,55</text>
<rect x="1143.9" y="143.8" width="13.2" height="13.2" fill="#ffffff" fill-opacity="0.12" stroke="#fff" stroke-opacity="0.9" stroke-width="1.7"/>
<rect x="1155.7" y="155.7" width="13.2" height="13.2" fill="#ffffff" fill-opacity="0.12" stroke="#fff" stroke-opacity="0.9" stroke-width="1.7"/>
<rect x="1167.9" y="167.9" width="13.2" height="13.2" fill="#ffffff" fill-opacity="0.12" stroke="#fff" stroke-opacity="0.9" stroke-width="1.7"/>
<rect x="1182.7" y="182.7" width="13.2" height="13.2" fill="#ffffff" fill-opacity="0.12" stroke="#fff" stroke-opacity="0.9" stroke-width="1.7"/>
<rect x="1200.8" y="199.7" width="13.2" height="13.2" fill="#ffffff" fill-opacity="0.12" stroke="#fff" stroke-opacity="0.9" stroke-width="1.7"/>
<rect x="1227.8" y="151.7" width="13.2" height="13.2" fill="#ffffff" fill-opacity="0.12" stroke="#fff" stroke-opacity="0.9" stroke-width="1.7"/>
<rect x="1226.7" y="164.4" width="13.2" height="13.2" fill="#ffffff" fill-opacity="0.12" stroke="#fff" stroke-opacity="0.9" stroke-width="1.7"/>
<rect x="1225.9" y="175.8" width="13.2" height="13.2" fill="#ffffff" fill-opacity="0.12" stroke="#fff" stroke-opacity="0.9" stroke-width="1.7"/>
<rect x="1225.1" y="189.3" width="13.2" height="13.2" fill="#ffffff" fill-opacity="0.12" stroke="#fff" stroke-opacity="0.9" stroke-width="1.7"/>
<rect x="1223.8" y="203.6" width="13.2" height="13.2" fill="#ffffff" fill-opacity="0.12" stroke="#fff" stroke-opacity="0.9" stroke-width="1.7"/>
<rect x="1158.7" y="231.9" width="13.2" height="13.2" fill="#ffffff" fill-opacity="0.12" stroke="#fff" stroke-opacity="0.9" stroke-width="1.7"/>
<rect x="1171.1" y="229.5" width="13.2" height="13.2" fill="#ffffff" fill-opacity="0.12" stroke="#fff" stroke-opacity="0.9" stroke-width="1.7"/>
<rect x="1183" y="227.5" width="13.2" height="13.2" fill="#ffffff" fill-opacity="0.12" stroke="#fff" stroke-opacity="0.9" stroke-width="1.7"/>
<rect x="1195.7" y="225.9" width="13.2" height="13.2" fill="#ffffff" fill-opacity="0.12" stroke="#fff" stroke-opacity="0.9" stroke-width="1.7"/>
<rect x="1208.7" y="224.3" width="13.2" height="13.2" fill="#ffffff" fill-opacity="0.12" stroke="#fff" stroke-opacity="0.9" stroke-width="1.7"/>
<rect x="1269.8" y="213" width="13.2" height="13.2" fill="#ffffff" fill-opacity="0.12" stroke="#fff" stroke-opacity="0.9" stroke-width="1.7"/>
<rect x="1322.8" y="203.6" width="13.2" height="13.2" fill="#ffffff" fill-opacity="0.12" stroke="#fff" stroke-opacity="0.9" stroke-width="1.7"/>
<rect x="1371.9" y="196.7" width="13.2" height="13.2" fill="#ffffff" fill-opacity="0.12" stroke="#fff" stroke-opacity="0.9" stroke-width="1.7"/>
<rect x="1426.7" y="186.8" width="13.2" height="13.2" fill="#ffffff" fill-opacity="0.12" stroke="#fff" stroke-opacity="0.9" stroke-width="1.7"/>
<rect x="1490.9" y="176.2" width="13.2" height="13.2" fill="#ffffff" fill-opacity="0.12" stroke="#fff" stroke-opacity="0.9" stroke-width="1.7"/>
<rect x="1238.9" y="237.8" width="13.2" height="13.2" fill="#ffffff" fill-opacity="0.12" stroke="#fff" stroke-opacity="0.9" stroke-width="1.7"/>
<rect x="1257.7" y="256.7" width="13.2" height="13.2" fill="#ffffff" fill-opacity="0.12" stroke="#fff" stroke-opacity="0.9" stroke-width="1.7"/>
<rect x="1276.8" y="276.5" width="13.2" height="13.2" fill="#ffffff" fill-opacity="0.12" stroke="#fff" stroke-opacity="0.9" stroke-width="1.7"/>
<rect x="1302.6" y="302.8" width="13.2" height="13.2" fill="#ffffff" fill-opacity="0.12" stroke="#fff" stroke-opacity="0.9" stroke-width="1.7"/>
<rect x="1335.8" y="333.7" width="13.2" height="13.2" fill="#ffffff" fill-opacity="0.12" stroke="#fff" stroke-opacity="0.9" stroke-width="1.7"/>
<rect x="1217.9" y="250.8" width="13.2" height="13.2" fill="#ffffff" fill-opacity="0.12" stroke="#fff" stroke-opacity="0.9" stroke-width="1.7"/>
<rect x="1215.9" y="288.1" width="13.2" height="13.2" fill="#ffffff" fill-opacity="0.12" stroke="#fff" stroke-opacity="0.9" stroke-width="1.7"/>
<rect x="1211.9" y="332.8" width="13.2" height="13.2" fill="#ffffff" fill-opacity="0.12" stroke="#fff" stroke-opacity="0.9" stroke-width="1.7"/>
<rect x="1205.7" y="389.9" width="13.2" height="13.2" fill="#ffffff" fill-opacity="0.12" stroke="#fff" stroke-opacity="0.9" stroke-width="1.7"/>
<rect x="1198" y="475.6" width="13.2" height="13.2" fill="#ffffff" fill-opacity="0.12" stroke="#fff" stroke-opacity="0.9" stroke-width="1.7"/>
<circle cx="1149.9" cy="150.5" r="3.9" fill="#10c010" stroke="#111" stroke-width="1.4"/>
<circle cx="1162.6" cy="161" r="3.9" fill="#50b850" stroke="#111" stroke-width="1.4"/>
<circle cx="1174.5" cy="175" r="3.9" fill="#60b060" stroke="#111" stroke-width="1.4"/>
<circle cx="1188" cy="189.9" r="3.9" fill="#80b080" stroke="#111" stroke-width="1.4"/>
<circle cx="1204.4" cy="206" r="3.9" fill="#98b098" stroke="#111" stroke-width="1.4"/>
<circle cx="1231.8" cy="158.3" r="3.9" fill="#c0b820" stroke="#111" stroke-width="1.4"/>
<circle cx="1230.4" cy="171" r="3.9" fill="#c0b850" stroke="#111" stroke-width="1.4"/>
<circle cx="1228.8" cy="181.6" r="3.9" fill="#c0b870" stroke="#111" stroke-width="1.4"/>
<circle cx="1227.4" cy="194.8" r="3.9" fill="#c0b890" stroke="#111" stroke-width="1.4"/>
<circle cx="1226.4" cy="209.9" r="3.9" fill="#c0b8a0" stroke="#111" stroke-width="1.4"/>
<circle cx="1163.7" cy="236" r="3.9" fill="#20b8c0" stroke="#111" stroke-width="1.4"/>
<circle cx="1177.2" cy="234.9" r="3.9" fill="#50b0b0" stroke="#111" stroke-width="1.4"/>
<circle cx="1188" cy="233.3" r="3.9" fill="#78b0b0" stroke="#111" stroke-width="1.4"/>
<circle cx="1200.4" cy="230.4" r="3.9" fill="#90b0b0" stroke="#111" stroke-width="1.4"/>
<circle cx="1212.9" cy="229.3" r="3.9" fill="#a0b0b0" stroke="#111" stroke-width="1.4"/>
<circle cx="1269.9" cy="219.6" r="3.9" fill="#c08888" stroke="#111" stroke-width="1.4"/>
<circle cx="1322.9" cy="209.7" r="3.9" fill="#c07070" stroke="#111" stroke-width="1.4"/>
<circle cx="1373.5" cy="202.1" r="3.9" fill="#c06060" stroke="#111" stroke-width="1.4"/>
<circle cx="1433.3" cy="192.2" r="3.9" fill="#c04040" stroke="#111" stroke-width="1.4"/>
<circle cx="1502.2" cy="181.3" r="3.9" fill="#d01010" stroke="#111" stroke-width="1.4"/>
<circle cx="1241.2" cy="242.8" r="3.9" fill="#c0a0c0" stroke="#111" stroke-width="1.4"/>
<circle cx="1258.9" cy="261.9" r="3.9" fill="#c090c0" stroke="#111" stroke-width="1.4"/>
<circle cx="1277.8" cy="282.5" r="3.9" fill="#c080c0" stroke="#111" stroke-width="1.4"/>
<circle cx="1305.2" cy="308" r="3.9" fill="#c070c0" stroke="#111" stroke-width="1.4"/>
<circle cx="1339.4" cy="344.7" r="3.9" fill="#c040c0" stroke="#111" stroke-width="1.4"/>
<circle cx="1222.5" cy="256.2" r="3.9" fill="#9090b0" stroke="#111" stroke-width="1.4"/>
<circle cx="1219.5" cy="292.2" r="3.9" fill="#8888b8" stroke="#111" stroke-width="1.4"/>
<circle cx="1214.1" cy="336.9" r="3.9" fill="#7878c0" stroke="#111" stroke-width="1.4"/>
<circle cx="1209.8" cy="398.3" r="3.9" fill="#6060c0" stroke="#111" stroke-width="1.4"/>
<circle cx="1202.9" cy="478.5" r="3.9" fill="#1818c0" stroke="#111" stroke-width="1.4"/>
<rect x="1221.2" y="221.2" width="12" height="12" fill="none" stroke="#000" stroke-width="2"/>
<circle cx="1224.9" cy="228" r="4.2" fill="#fff" stroke="#111" stroke-width="1.2"/>
</svg>
<!-- inset -->
<div class="abs" style="left:1439px;top:460px;width:212px;height:144.5px;background:#888;"></div>
<svg class="abs" style="left:1440.5px;top:461.5px;" width="209" height="141.5">
<defs>
<linearGradient id="inb" x1="0" y1="0" x2="1" y2="1"><stop offset="0" stop-color="#a8ff00"/><stop offset="0.5" stop-color="#ffff00"/><stop offset="1" stop-color="#ffb400"/></linearGradient>
<linearGradient id="ind" x1="0" y1="0" x2="1" y2="1"><stop offset="0" stop-color="#669a00"/><stop offset="0.5" stop-color="#9a9400"/><stop offset="1" stop-color="#8e6800"/></linearGradient>
</defs>
<rect x="0" y="0" width="209" height="141.5" fill="url(#ind)"/>
<path d="M0 14.5 L209 127 L209 141.5 L0 141.5 Z" fill="url(#inb)"/>
<rect x="97" y="63" width="13" height="13" fill="none" stroke="#fff" stroke-width="1.8"/>
<circle cx="90.5" cy="59.3" r="4.3" fill="#c0b820" stroke="#111" stroke-width="1.4"/>
</svg>

<!-- table -->
<div style="position:absolute;left:627.5px;top:655.5px;width:729px;height:236px;background:#000;"></div>
<div style="position:absolute;left:628.5px;top:656.5px;width:726.5px;height:28.25px;background:linear-gradient(#333 0%,#303030 48%,#181818 52%,#141414 100%);"></div>
<div style="position:absolute;left:628.5px;top:684.75px;width:726.5px;height:25.75px;background:#3e3e3e;"></div>
<div style="position:absolute;left:628.5px;top:710.5px;width:726.5px;height:25.75px;background:#7f7f7f;"></div>
<div style="position:absolute;left:628.5px;top:736.25px;width:726.5px;height:25.75px;background:#3e3e3e;"></div>
<div style="position:absolute;left:628.5px;top:762px;width:726.5px;height:25.75px;background:#7f7f7f;"></div>
<div style="position:absolute;left:628.5px;top:787.75px;width:726.5px;height:25.75px;background:#3e3e3e;"></div>
<div style="position:absolute;left:628.5px;top:813.5px;width:726.5px;height:25.75px;background:#7f7f7f;"></div>
<div style="position:absolute;left:628.5px;top:839.25px;width:726.5px;height:25.75px;background:#3e3e3e;"></div>
<div style="position:absolute;left:628.5px;top:865px;width:726.5px;height:25.75px;background:#7f7f7f;"></div>
<svg class="abs" style="left:0;top:0;" width="1668" height="1007"><text transform="translate(876.15,676.2) scale(1.39,1)" font-size="14.5" font-weight="bold" text-anchor="middle" fill="#f6f6f6">20%</text>
<text transform="translate(982.45,676.2) scale(1.39,1)" font-size="14.5" font-weight="bold" text-anchor="middle" fill="#f6f6f6">40%</text>
<text transform="translate(1088.75,676.2) scale(1.39,1)" font-size="14.5" font-weight="bold" text-anchor="middle" fill="#f6f6f6">60%</text>
<text transform="translate(1195.05,676.2) scale(1.39,1)" font-size="14.5" font-weight="bold" text-anchor="middle" fill="#f6f6f6">80%</text>
<text transform="translate(1301.35,676.2) scale(1.39,1)" font-size="14.5" font-weight="bold" text-anchor="middle" fill="#f6f6f6">100%</text>
<text transform="translate(645.4,705.05) scale(1.33,1)" font-size="17.2" font-weight="bold" fill="#f2efe8">x: CIE31</text>
<text transform="translate(828.1,704.95) scale(1.415,1)" font-size="16" fill="#f2efe8">0,3301</text>
<text transform="translate(934.4,704.95) scale(1.415,1)" font-size="16" fill="#f2efe8">0,3524</text>
<text transform="translate(1040.7,704.95) scale(1.415,1)" font-size="16" fill="#f2efe8">0,3727</text>
<text transform="translate(1147,704.95) scale(1.415,1)" font-size="16" fill="#f2efe8">0,3923</text>
<text transform="translate(1253.3,704.95) scale(1.415,1)" font-size="16" fill="#f2efe8">0,4160</text>
<text transform="translate(645.4,730.8) scale(1.33,1)" font-size="17.2" font-weight="bold" fill="#f2efe8">y: CIE31</text>
<text transform="translate(828.1,730.7) scale(1.415,1)" font-size="16" fill="#f2efe8">0,3654</text>
<text transform="translate(934.4,730.7) scale(1.415,1)" font-size="16" fill="#f2efe8">0,4029</text>
<text transform="translate(1040.7,730.7) scale(1.415,1)" font-size="16" fill="#f2efe8">0,4372</text>
<text transform="translate(1147,730.7) scale(1.415,1)" font-size="16" fill="#f2efe8">0,4697</text>
<text transform="translate(1253.3,730.7) scale(1.415,1)" font-size="16" fill="#f2efe8">0,5091</text>
<text transform="translate(645.4,756.55) scale(1.33,1)" font-size="17.2" font-weight="bold" fill="#f2efe8">Y</text>
<text transform="translate(828.1,756.45) scale(1.415,1)" font-size="16" fill="#f2efe8">318,6227</text>
<text transform="translate(934.4,756.45) scale(1.415,1)" font-size="16" fill="#f2efe8">312,0216</text>
<text transform="translate(1040.7,756.45) scale(1.415,1)" font-size="16" fill="#f2efe8">307,0222</text>
<text transform="translate(1147,756.45) scale(1.415,1)" font-size="16" fill="#f2efe8">302,8020</text>
<text transform="translate(1253.3,756.45) scale(1.415,1)" font-size="16" fill="#f2efe8">298,3232</text>
<text transform="translate(645.4,782.3) scale(1.33,1)" font-size="17.2" font-weight="bold" fill="#f2efe8">Target x:CIE31</text>
<text transform="translate(828.1,782.2) scale(1.415,1)" font-size="16" fill="#f2efe8">0,3344</text>
<text transform="translate(934.4,782.2) scale(1.415,1)" font-size="16" fill="#f2efe8">0,3564</text>
<text transform="translate(1040.7,782.2) scale(1.415,1)" font-size="16" fill="#f2efe8">0,3773</text>
<text transform="translate(1147,782.2) scale(1.415,1)" font-size="16" fill="#f2efe8">0,3969</text>
<text transform="translate(1253.3,782.2) scale(1.415,1)" font-size="16" fill="#f2efe8">0,4193</text>
<text transform="translate(645.4,808.05) scale(1.33,1)" font-size="17.2" font-weight="bold" fill="#f2efe8">Target y:CIE31</text>
<text transform="translate(828.1,807.95) scale(1.415,1)" font-size="16" fill="#f2efe8">0,3648</text>
<text transform="translate(934.4,807.95) scale(1.415,1)" font-size="16" fill="#f2efe8">0,4013</text>
<text transform="translate(1040.7,807.95) scale(1.415,1)" font-size="16" fill="#f2efe8">0,4358</text>
<text transform="translate(1147,807.95) scale(1.415,1)" font-size="16" fill="#f2efe8">0,4682</text>
<text transform="translate(1253.3,807.95) scale(1.415,1)" font-size="16" fill="#f2efe8">0,5053</text>
<text transform="translate(645.4,833.8) scale(1.33,1)" font-size="17.2" font-weight="bold" fill="#f2efe8">Target Y</text>
<text transform="translate(828.1,833.7) scale(1.415,1)" font-size="16" fill="#f2efe8">315,0673</text>
<text transform="translate(934.4,833.7) scale(1.415,1)" font-size="16" fill="#f2efe8">309,5370</text>
<text transform="translate(1040.7,833.7) scale(1.415,1)" font-size="16" fill="#f2efe8">305,2877</text>
<text transform="translate(1147,833.7) scale(1.415,1)" font-size="16" fill="#f2efe8">301,9528</text>
<text transform="translate(1253.3,833.7) scale(1.415,1)" font-size="16" fill="#f2efe8">298,7288</text>
<text transform="translate(645.4,859.55) scale(1.33,1)" font-size="17.2" font-weight="bold" fill="#f2efe8">&#916;E 2000</text>
<text transform="translate(828.1,859.45) scale(1.415,1)" font-size="16" fill="#f2efe8">2,1401</text>
<text transform="translate(934.4,859.45) scale(1.415,1)" font-size="16" fill="#f2efe8">1,5103</text>
<text transform="translate(1040.7,859.45) scale(1.415,1)" font-size="16" fill="#f2efe8">1,3129</text>
<text transform="translate(1147,859.45) scale(1.415,1)" font-size="16" fill="#f2efe8">1,1751</text>
<text transform="translate(1253.3,859.45) scale(1.415,1)" font-size="16" fill="#f2efe8">0,9533</text>
<text transform="translate(645.4,885.3) scale(1.33,1)" font-size="17.2" font-weight="bold" fill="#f2efe8">&#916;E ITP</text>
<text transform="translate(828.1,885.2) scale(1.415,1)" font-size="16" fill="#f2efe8">2,9738</text>
<text transform="translate(934.4,885.2) scale(1.415,1)" font-size="16" fill="#f2efe8">2,7894</text>
<text transform="translate(1040.7,885.2) scale(1.415,1)" font-size="16" fill="#f2efe8">2,7899</text>
<text transform="translate(1147,885.2) scale(1.415,1)" font-size="16" fill="#f2efe8">2,7080</text>
<text transform="translate(1253.3,885.2) scale(1.415,1)" font-size="16" fill="#f2efe8">2,4902</text></svg>

<!-- bottom toolbar -->
<div class="abs" style="left:0.8px;top:930.3px;width:55.4px;height:80px;background:linear-gradient(#a0a0a0 0%,#8e8e8e 45%,#6c6c6c 100%);border-radius:5px 5px 0 0;"></div>
<div class="abs" style="left:18.8px;top:931.8px;width:19.2px;height:19.2px;border-radius:50%;background:radial-gradient(circle at 50% 35%,#5a5a5a,#9a9a9a);"></div>
<svg class="abs" style="left:0;top:930px" width="60" height="30"><path d="M23 13.8 L34 13.8 L28.5 8.3 Z" fill="#222"/></svg>
<div class="abs" style="left:6.1px;top:962.9px;width:44px;height:37.8px;background:#ffff00;border:1px solid #9a9a00;box-sizing:border-box;border-radius:5px;"></div>
<div class="abs" style="left:64px;top:930px;width:187.5px;height:80px;background:linear-gradient(#a9a9a9 0%,#949494 25%,#7e7e7e 66%,#6c6c6c 70%,#5a5a5a 100%);border-radius:6px 6px 0 0;"></div>
<div class="abs" style="left:70.3px;top:937.2px;width:175px;height:44.7px;background:#c2c4a6;border:1px solid rgba(0,0,0,0.25);box-sizing:border-box;border-radius:5px;"></div>
<div class="abs" style="left:64px;top:988px;width:187.5px;text-align:center;font-size:13px;font-weight:bold;color:#2c2c2c;line-height:16px;">20%</div>
<div class="abs" style="left:254.1px;top:930px;width:187.5px;height:80px;background:linear-gradient(#a9a9a9 0%,#949494 25%,#7e7e7e 66%,#6c6c6c 70%,#5a5a5a 100%);border-radius:6px 6px 0 0;"></div>
<div class="abs" style="left:260.4px;top:937.2px;width:175px;height:44.7px;background:#c3c489;border:1px solid rgba(0,0,0,0.25);box-sizing:border-box;border-radius:5px;"></div>
<div class="abs" style="left:254.1px;top:988px;width:187.5px;text-align:center;font-size:13px;font-weight:bold;color:#2c2c2c;line-height:16px;">40%</div>
<div class="abs" style="left:444.2px;top:930px;width:187.5px;height:80px;background:linear-gradient(#a9a9a9 0%,#949494 25%,#7e7e7e 66%,#6c6c6c 70%,#5a5a5a 100%);border-radius:6px 6px 0 0;"></div>
<div class="abs" style="left:450.5px;top:937.2px;width:175px;height:44.7px;background:#c3c46d;border:1px solid rgba(0,0,0,0.25);box-sizing:border-box;border-radius:5px;"></div>
<div class="abs" style="left:444.2px;top:988px;width:187.5px;text-align:center;font-size:13px;font-weight:bold;color:#2c2c2c;line-height:16px;">60%</div>
<div class="abs" style="left:634.3px;top:930px;width:187.5px;height:80px;background:linear-gradient(#a9a9a9 0%,#949494 25%,#7e7e7e 66%,#6c6c6c 70%,#5a5a5a 100%);border-radius:6px 6px 0 0;"></div>
<div class="abs" style="left:640.6px;top:937.2px;width:175px;height:44.7px;background:#c1c252;border:1px solid rgba(0,0,0,0.25);box-sizing:border-box;border-radius:5px;"></div>
<div class="abs" style="left:634.3px;top:988px;width:187.5px;text-align:center;font-size:13px;font-weight:bold;color:#2c2c2c;line-height:16px;">80%</div>
<div class="abs" style="left:1011px;top:930px;width:254px;height:77px;background:linear-gradient(#494949,#3a3a3a 40%,#262626);"></div>
<div class="abs" style="left:824px;top:930px;width:187px;height:80px;background:linear-gradient(#1e1e1e,#242424 60%,#343434);border-radius:6px 6px 0 0;"></div>
<div class="abs" style="left:830px;top:936.7px;width:175.5px;height:45.2px;background:#c4c000;border:1px solid rgba(0,0,0,0.3);box-sizing:border-box;border-radius:5px;"></div>
<div class="abs" style="left:824px;top:988px;width:187px;text-align:center;font-size:13px;font-weight:bold;color:#fafafa;line-height:16px;">100%</div>
<div class="abs" style="left:1265px;top:930.5px;width:60.2px;height:80px;background:linear-gradient(#a9a9a9 0%,#949494 25%,#7e7e7e 66%,#6c6c6c 70%,#5a5a5a 100%);border-radius:6px 6px 0 0;"></div>
<div class="abs" style="left:1265px;top:952.5px;width:60.2px;height:1.5px;background:#5a5a5a;"></div>
<div class="abs" style="left:1326.4px;top:930.5px;width:57.6px;height:37px;background:linear-gradient(#ababab 0%,#8e8e8e 50%,#6c6c6c 100%);"></div>
<div class="abs" style="left:1384.8px;top:930.5px;width:55.4px;height:37px;background:linear-gradient(#ababab 0%,#8e8e8e 50%,#6c6c6c 100%);"></div>
<div class="abs" style="left:1441px;top:930.5px;width:55px;height:37px;background:linear-gradient(#ababab 0%,#8e8e8e 50%,#6c6c6c 100%);"></div>
<div class="abs" style="left:1498px;top:930.5px;width:55.3px;height:37px;background:linear-gradient(#ababab 0%,#8e8e8e 50%,#6c6c6c 100%);"></div>
<div class="abs" style="left:1554.2px;top:930.5px;width:55.3px;height:37px;background:linear-gradient(#ababab 0%,#8e8e8e 50%,#6c6c6c 100%);"></div>
<div class="abs" style="left:1610.3px;top:930.5px;width:57.7px;height:37px;background:linear-gradient(#ababab 0%,#8e8e8e 50%,#6c6c6c 100%);"></div>
<div class="abs" style="left:1326.4px;top:969.4px;width:169.2px;height:40px;background:linear-gradient(#ababab 0%,#8e8e8e 50%,#6c6c6c 100%);"></div>
<div class="abs" style="left:1498px;top:969.4px;width:170px;height:40px;background:linear-gradient(#ababab 0%,#8e8e8e 50%,#6c6c6c 100%);"></div>
<svg class="abs" style="left:1250px;top:920px" width="418" height="87"><defs><linearGradient id="bc" x1="0" y1="0" x2="0" y2="1"><stop offset="0" stop-color="#747474"/><stop offset="1" stop-color="#b4b4b4"/></linearGradient></defs>
<circle cx="105.3" cy="28.8" r="12.5" fill="url(#bc)"/>
<circle cx="163" cy="28.8" r="12.5" fill="url(#bc)"/>
<circle cx="219.3" cy="28.8" r="12.5" fill="url(#bc)"/>
<circle cx="275.2" cy="28.8" r="12.5" fill="url(#bc)"/>
<circle cx="331.3" cy="28.8" r="12.5" fill="url(#bc)"/>
<circle cx="388.5" cy="28.8" r="12.5" fill="url(#bc)"/>
<circle cx="45" cy="21.3" r="9.5" fill="url(#bc)"/>
<path d="M40 24.5 L50 24.5 L45 18.5 Z" fill="#111"/>
<rect x="100" y="23.8" width="10" height="10" fill="#333"/>
<path d="M159 22.5 L169 28.8 L159 35 Z" fill="#333"/>
<path d="M212.5 22.5 L210.8 22.5 L210.8 35 L212.5 35 M226.1 22.5 L227.8 22.5 L227.8 35 L226.1 35" fill="none" stroke="#333" stroke-width="2.4"/><rect x="215.6" y="27.8" width="2" height="2" fill="#333"/><rect x="221" y="27.8" width="2" height="2" fill="#333"/>
<g fill="none" stroke="#333" stroke-width="2.6"><ellipse cx="270.9" cy="28.6" rx="4.3" ry="3.6"/><ellipse cx="279.5" cy="28.6" rx="4.3" ry="3.6"/></g>
<path d="M325.3 28 A6.2 6.2 0 0 1 336 24.5 M337.3 29.6 A6.2 6.2 0 0 1 326.6 33.1" fill="none" stroke="#333" stroke-width="2.8"/><path d="M333.5 20.5 L339.5 21 L337 26.5 Z M329.1 37.1 L323.1 36.6 L325.6 31.1 Z" fill="#333"/>
<circle cx="115.3" cy="67.7" r="12" fill="url(#bc)"/>
<circle cx="381.5" cy="67.7" r="12" fill="url(#bc)"/>
<text x="115.3" y="75" font-size="24" text-anchor="middle" fill="#333">&#171;</text>
<text x="148.5" y="77.7" font-size="28.2" fill="#363636" textLength="65.3" lengthAdjust="spacingAndGlyphs">Back</text>
<text x="280.6" y="77.2" font-size="28.2" fill="#363636" textLength="67.8" lengthAdjust="spacingAndGlyphs">Next</text>
<text x="381.5" y="75" font-size="24" text-anchor="middle" fill="#333">&#187;</text>
<rect x="27.5" y="42.5" width="36" height="36" rx="4" fill="none" stroke="#222" stroke-width="3"/>
<rect x="30" y="45" width="31" height="31" rx="3" fill="none" stroke="#ccc" stroke-width="1.5"/>
<rect x="37" y="52" width="17" height="17" fill="#000"/>
</svg>
<div class="abs" style="left:1656px;top:930px;width:12px;height:77px;background:linear-gradient(90deg,rgba(0,0,0,0),rgba(0,0,0,0.5));"></div>
</body></html>
